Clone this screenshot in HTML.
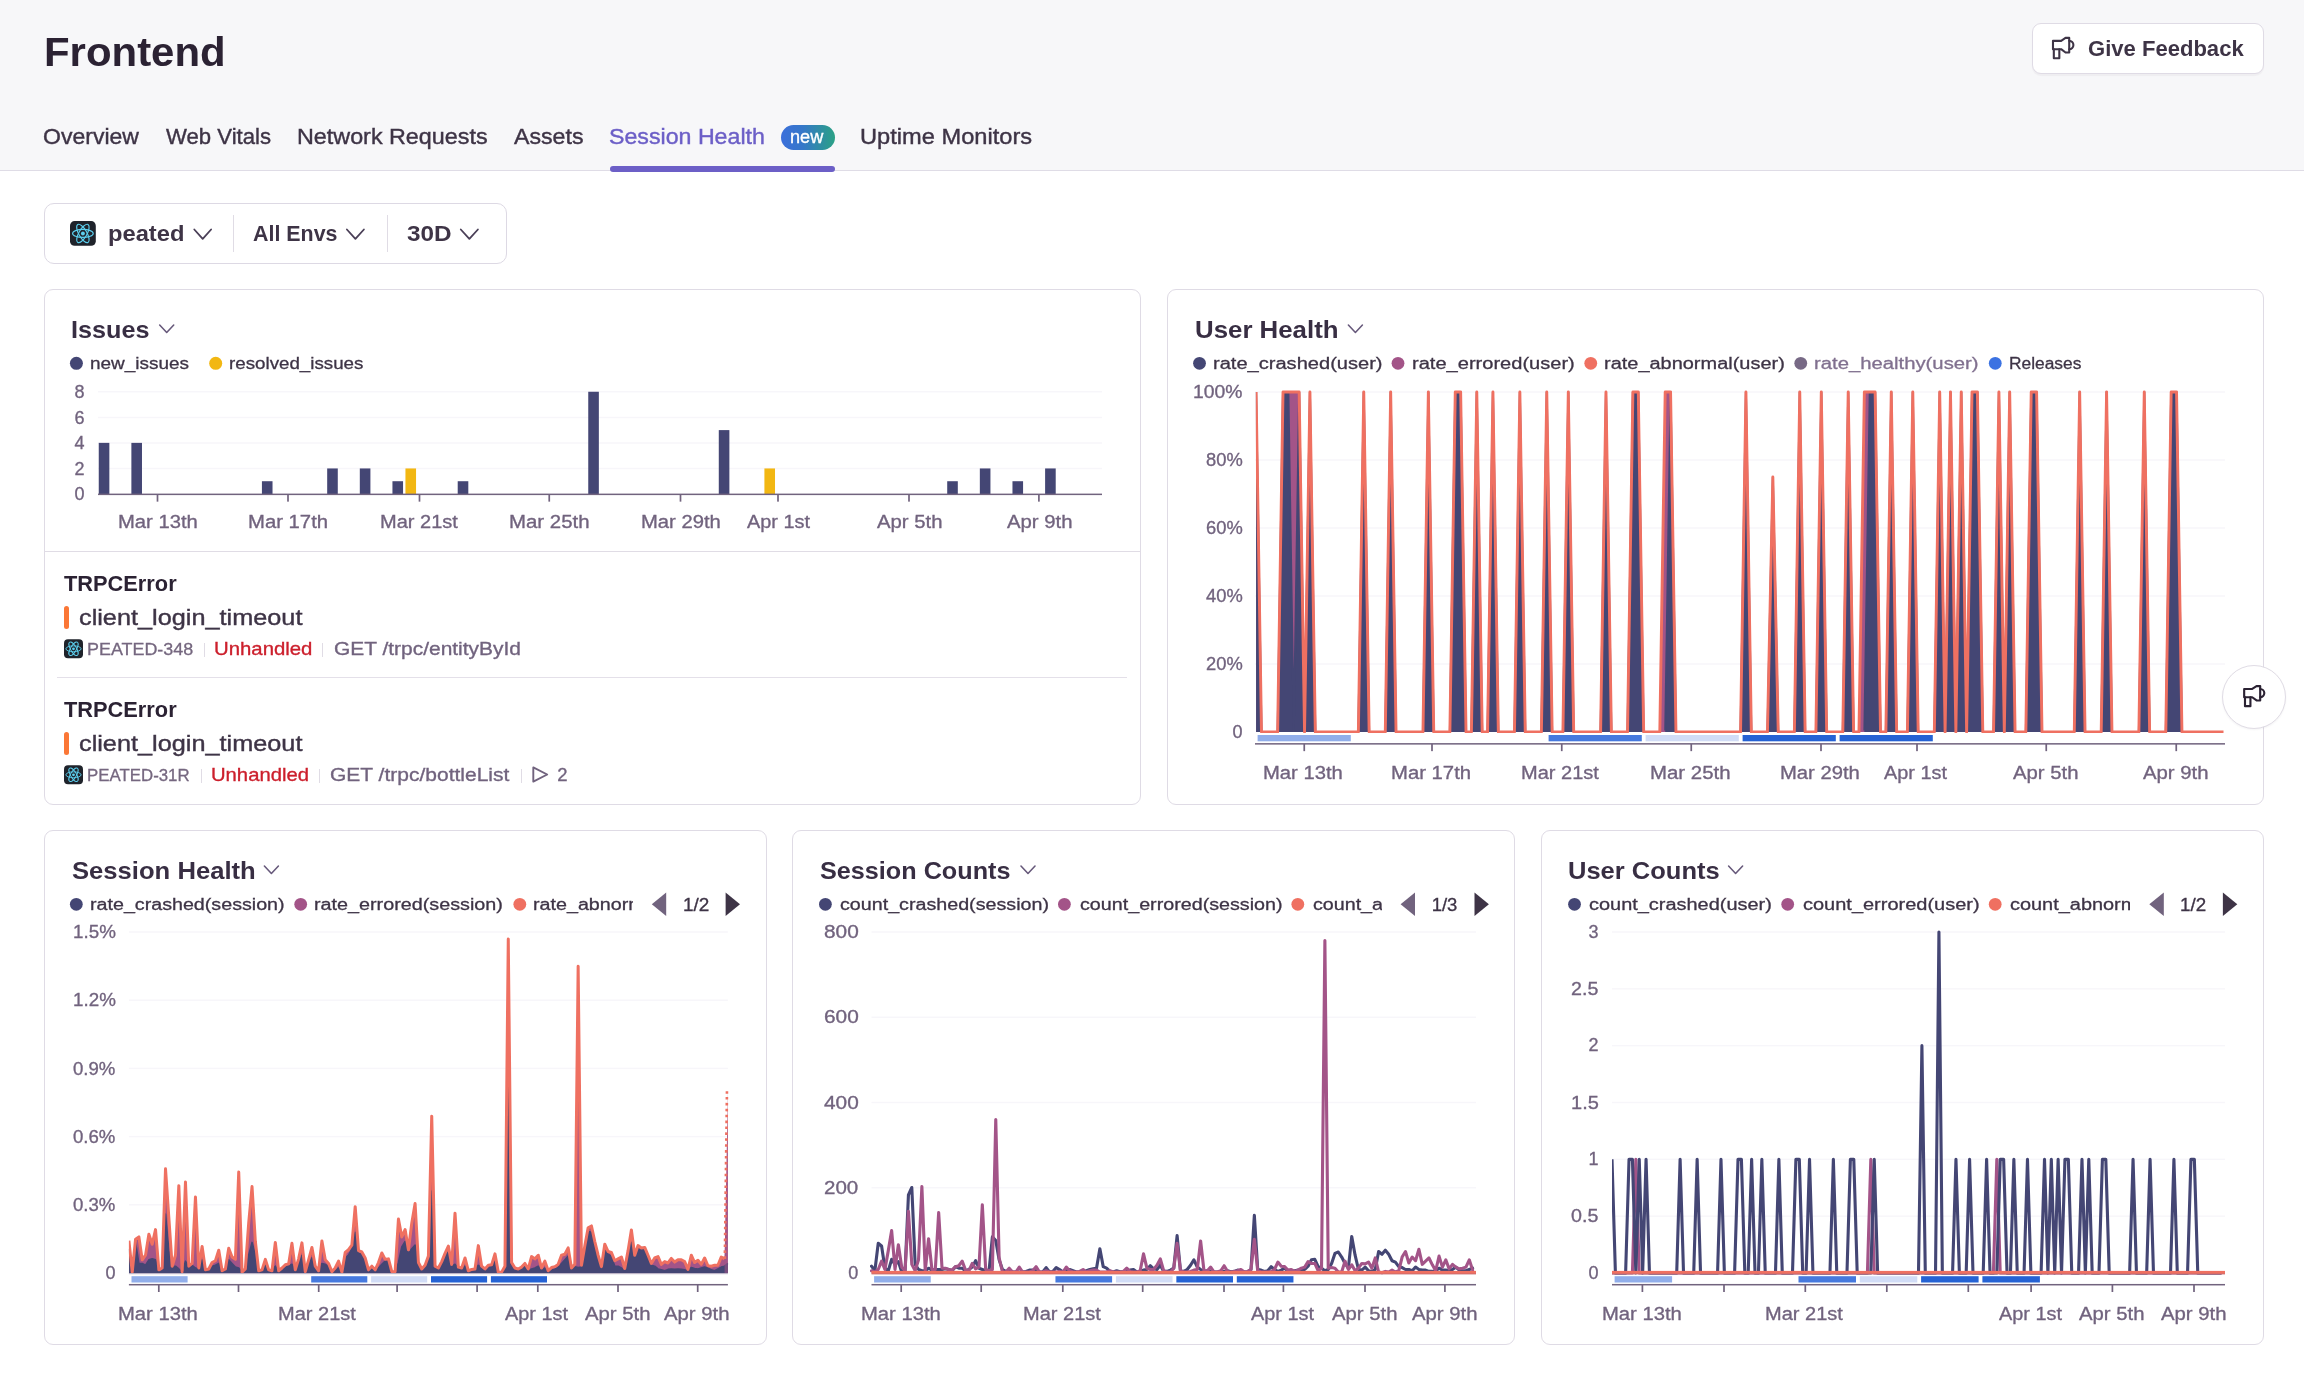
<!DOCTYPE html><html><head><meta charset="utf-8"><title>Frontend - Session Health</title><style>
html,body{margin:0;padding:0;background:#fff}
body{width:2304px;height:1388px;position:relative;overflow:hidden;font-family:"Liberation Sans",sans-serif}
.t{position:absolute;white-space:nowrap;transform-origin:0 50%;margin:0}
svg.ov{position:absolute;left:0;top:0;pointer-events:none}
</style></head><body>
<div style="position:absolute;left:0px;top:0px;width:2304px;height:170px;background:#f7f7f9;border-bottom:1px solid #dfdce6"></div>
<div style="position:absolute;left:781px;top:124.6px;width:54px;height:25.6px;border-radius:13px;background:linear-gradient(90deg,#3c6fdb 0%,#3577c9 40%,#2ba185 100%)"></div>
<div style="position:absolute;left:609.75px;top:166.2px;width:224.75px;height:5.6px;border-radius:3px;background:#6c5fc7"></div>
<div style="position:absolute;left:2032px;top:23px;width:232px;height:51px;box-sizing:border-box;background:#fff;border:1px solid #dfdbe5;border-radius:9px;box-shadow:0 2px 1px rgba(43,34,51,.04)"></div>
<div style="position:absolute;left:44px;top:203px;width:463px;height:61px;box-sizing:border-box;background:#fff;border:1.5px solid #ddd9e4;border-radius:10px"></div>
<div style="position:absolute;left:233.3px;top:215px;width:1px;height:37px;background:#e0dce5"></div>
<div style="position:absolute;left:386.8px;top:215px;width:1px;height:37px;background:#e0dce5"></div>
<div style="position:absolute;left:44px;top:289px;width:1097px;height:516px;box-sizing:border-box;background:#fff;border:1px solid #dfdbe5;border-radius:9px"></div>
<div style="position:absolute;left:1167px;top:289px;width:1097px;height:516px;box-sizing:border-box;background:#fff;border:1px solid #dfdbe5;border-radius:9px"></div>
<div style="position:absolute;left:44px;top:830px;width:723px;height:515px;box-sizing:border-box;background:#fff;border:1px solid #dfdbe5;border-radius:9px"></div>
<div style="position:absolute;left:792px;top:830px;width:723px;height:515px;box-sizing:border-box;background:#fff;border:1px solid #dfdbe5;border-radius:9px"></div>
<div style="position:absolute;left:1541px;top:830px;width:723px;height:515px;box-sizing:border-box;background:#fff;border:1px solid #dfdbe5;border-radius:9px"></div>
<div style="position:absolute;left:45px;top:551px;width:1095px;height:1px;background:#e0dce5"></div>
<div style="position:absolute;left:57px;top:677px;width:1070px;height:1px;background:#e4e0e9"></div>
<div style="position:absolute;left:64px;top:606.3px;width:5px;height:22.4px;border-radius:2.5px;background:#fb7736"></div>
<div style="position:absolute;left:204px;top:642.5px;width:1px;height:14px;background:#e0dce5"></div>
<div style="position:absolute;left:322px;top:642.5px;width:1px;height:14px;background:#e0dce5"></div>
<div style="position:absolute;left:64px;top:732.3px;width:5px;height:22.4px;border-radius:2.5px;background:#fb7736"></div>
<div style="position:absolute;left:201px;top:768.5px;width:1px;height:14px;background:#e0dce5"></div>
<div style="position:absolute;left:319px;top:768.5px;width:1px;height:14px;background:#e0dce5"></div>
<div style="position:absolute;left:521px;top:768.5px;width:1px;height:14px;background:#e0dce5"></div>
<svg class="ov" width="2304" height="1388" viewBox="0 0 2304 1388">
<g transform="translate(2051.8 36.8) scale(1.39375)" fill="none" stroke="#3e3446" stroke-width="1.5" stroke-linejoin="round" stroke-linecap="round"><path d="M0.85 2.9 H6.7 L9.85 0.8 H12.5 V11.25 H9.85 L6.7 8.9 H0.85 Z"/><path d="M1.45 8.9 V15.4 H5.4 V8.9"/><path d="M12.5 2.9 A3 3 0 0 1 12.5 8.9"/></g>
<rect x="70" y="221.1" width="25.8" height="24.7" rx="4.6" fill="#1f232b"/><ellipse cx="82.9" cy="233.45" rx="10.32" ry="3.999" fill="none" stroke="#5ccfee" stroke-width="1.161" transform="rotate(0 82.9 233.45)"/><ellipse cx="82.9" cy="233.45" rx="10.32" ry="3.999" fill="none" stroke="#5ccfee" stroke-width="1.161" transform="rotate(60 82.9 233.45)"/><ellipse cx="82.9" cy="233.45" rx="10.32" ry="3.999" fill="none" stroke="#5ccfee" stroke-width="1.161" transform="rotate(120 82.9 233.45)"/><circle cx="82.9" cy="233.45" r="1.935" fill="#5ccfee"/>
<path d="M194.3 229.5 L202.7 238.9 L211.1 229.5" fill="none" stroke="#4a3f57" stroke-width="1.8" stroke-linecap="round" stroke-linejoin="round"/>
<path d="M346.9 229.5 L355.4 238.9 L363.9 229.5" fill="none" stroke="#4a3f57" stroke-width="1.8" stroke-linecap="round" stroke-linejoin="round"/>
<path d="M460.8 229.5 L469.35 238.9 L477.9 229.5" fill="none" stroke="#4a3f57" stroke-width="1.8" stroke-linecap="round" stroke-linejoin="round"/>
<path d="M159.675 324.975 L166.7 332.525 L173.725 324.975" fill="none" stroke="#66587a" stroke-width="1.55" stroke-linecap="round" stroke-linejoin="round"/>
<circle cx="76.4" cy="363.3" r="6.5" fill="#444674"/>
<circle cx="215.7" cy="363.3" r="6.5" fill="#f2b712"/>
<rect x="98" y="391.05" width="1004" height="1.4" fill="#f7f6fa"/>
<rect x="98" y="416.8" width="1004" height="1.4" fill="#f7f6fa"/>
<rect x="98" y="442.3" width="1004" height="1.4" fill="#f7f6fa"/>
<rect x="98" y="467.8" width="1004" height="1.4" fill="#f7f6fa"/>
<rect x="98.75" y="442.88" width="10.6" height="51.12" fill="#444674"/>
<rect x="131.38" y="442.88" width="10.6" height="51.12" fill="#444674"/>
<rect x="261.92" y="481.22" width="10.6" height="12.78" fill="#444674"/>
<rect x="327.18" y="468.44" width="10.6" height="25.56" fill="#444674"/>
<rect x="359.81" y="468.44" width="10.6" height="25.56" fill="#444674"/>
<rect x="392.45" y="481.22" width="10.6" height="12.78" fill="#444674"/>
<rect x="457.71" y="481.22" width="10.6" height="12.78" fill="#444674"/>
<rect x="588.25" y="391.76" width="10.6" height="102.24" fill="#444674"/>
<rect x="718.78" y="430.10" width="10.6" height="63.90" fill="#444674"/>
<rect x="947.21" y="481.22" width="10.6" height="12.78" fill="#444674"/>
<rect x="979.84" y="468.44" width="10.6" height="25.56" fill="#444674"/>
<rect x="1012.47" y="481.22" width="10.6" height="12.78" fill="#444674"/>
<rect x="1045.11" y="468.44" width="10.6" height="25.56" fill="#444674"/>
<rect x="405.45" y="468.44" width="10.6" height="25.56" fill="#f2b712"/>
<rect x="764.41" y="468.44" width="10.6" height="25.56" fill="#f2b712"/>
<rect x="98" y="493.6" width="1004" height="1.5" fill="#71637e"/>
<rect x="156.65" y="494.35" width="1.7" height="7.3" fill="#71637e"/>
<rect x="287.15" y="494.35" width="1.7" height="7.3" fill="#71637e"/>
<rect x="418.65" y="494.35" width="1.7" height="7.3" fill="#71637e"/>
<rect x="548.4" y="494.35" width="1.7" height="7.3" fill="#71637e"/>
<rect x="679.65" y="494.35" width="1.7" height="7.3" fill="#71637e"/>
<rect x="777.15" y="494.35" width="1.7" height="7.3" fill="#71637e"/>
<rect x="908.15" y="494.35" width="1.7" height="7.3" fill="#71637e"/>
<rect x="1038.05" y="494.35" width="1.7" height="7.3" fill="#71637e"/>
<rect x="64" y="639.3" width="19" height="19" rx="4" fill="#1f232b"/><ellipse cx="73.5" cy="648.8" rx="7.6" ry="2.945" fill="none" stroke="#5ccfee" stroke-width="0.9" transform="rotate(0 73.5 648.8)"/><ellipse cx="73.5" cy="648.8" rx="7.6" ry="2.945" fill="none" stroke="#5ccfee" stroke-width="0.9" transform="rotate(60 73.5 648.8)"/><ellipse cx="73.5" cy="648.8" rx="7.6" ry="2.945" fill="none" stroke="#5ccfee" stroke-width="0.9" transform="rotate(120 73.5 648.8)"/><circle cx="73.5" cy="648.8" r="1.425" fill="#5ccfee"/>
<rect x="64" y="765.3" width="19" height="19" rx="4" fill="#1f232b"/><ellipse cx="73.5" cy="774.8" rx="7.6" ry="2.945" fill="none" stroke="#5ccfee" stroke-width="0.9" transform="rotate(0 73.5 774.8)"/><ellipse cx="73.5" cy="774.8" rx="7.6" ry="2.945" fill="none" stroke="#5ccfee" stroke-width="0.9" transform="rotate(60 73.5 774.8)"/><ellipse cx="73.5" cy="774.8" rx="7.6" ry="2.945" fill="none" stroke="#5ccfee" stroke-width="0.9" transform="rotate(120 73.5 774.8)"/><circle cx="73.5" cy="774.8" r="1.425" fill="#5ccfee"/>
<path d="M533.3 767.4 L547.2 774.5 L533.3 781.6 Z" fill="none" stroke="#71637e" stroke-width="1.9" stroke-linejoin="round"/>
<path d="M1348.38 324.975 L1355.4 332.525 L1362.42 324.975" fill="none" stroke="#66587a" stroke-width="1.55" stroke-linecap="round" stroke-linejoin="round"/>
<circle cx="1199.5" cy="363.3" r="6.4" fill="#444674"/>
<circle cx="1398" cy="363.3" r="6.4" fill="#a35488"/>
<circle cx="1590.75" cy="363.3" r="6.4" fill="#ef7061"/>
<circle cx="1800.75" cy="363.3" r="6.4" fill="#776985"/>
<circle cx="1995.25" cy="363.3" r="6.4" fill="#3b72e2"/>
<rect x="1255" y="391.3" width="970" height="1.4" fill="#f7f6fa"/>
<rect x="1255" y="459.3" width="970" height="1.4" fill="#f7f6fa"/>
<rect x="1255" y="527.3" width="970" height="1.4" fill="#f7f6fa"/>
<rect x="1255" y="595.3" width="970" height="1.4" fill="#f7f6fa"/>
<rect x="1255" y="663.3" width="970" height="1.4" fill="#f7f6fa"/>
<clipPath id="cu"><rect x="1255.6" y="385" width="969.4" height="352"/></clipPath><g clip-path="url(#cu)">
<polygon points="1256.10,392.00 1261.48,732.00 1266.87,732.00 1272.25,732.00 1277.63,732.00 1283.01,392.00 1288.40,392.00 1293.78,392.00 1299.16,392.00 1304.54,732.00 1309.93,392.00 1315.31,732.00 1320.69,732.00 1326.08,732.00 1331.46,732.00 1336.84,732.00 1342.22,732.00 1347.61,732.00 1352.99,732.00 1358.37,732.00 1363.76,392.00 1369.14,732.00 1374.52,732.00 1379.90,732.00 1385.29,732.00 1390.67,392.00 1396.05,732.00 1401.43,732.00 1406.82,732.00 1412.20,732.00 1417.58,732.00 1422.97,732.00 1428.35,392.00 1433.73,732.00 1439.11,732.00 1444.50,732.00 1449.88,732.00 1455.26,392.00 1460.65,392.00 1466.03,732.00 1471.41,732.00 1476.79,392.00 1482.18,732.00 1487.56,732.00 1492.94,392.00 1498.32,732.00 1503.71,732.00 1509.09,732.00 1514.47,732.00 1519.86,392.00 1525.24,732.00 1530.62,732.00 1536.00,732.00 1541.39,732.00 1546.77,392.00 1552.15,732.00 1557.54,732.00 1562.92,732.00 1568.30,392.00 1573.68,732.00 1579.07,732.00 1584.45,732.00 1589.83,732.00 1595.21,732.00 1600.60,732.00 1605.98,392.00 1611.36,732.00 1616.75,732.00 1622.13,732.00 1627.51,732.00 1632.89,392.00 1638.28,392.00 1643.66,732.00 1649.04,732.00 1654.43,732.00 1659.81,732.00 1665.19,392.00 1670.57,392.00 1675.96,732.00 1681.34,732.00 1686.72,732.00 1692.11,732.00 1697.49,732.00 1702.87,732.00 1708.25,732.00 1713.64,732.00 1719.02,732.00 1724.40,732.00 1729.78,732.00 1735.17,732.00 1740.55,732.00 1745.93,392.00 1751.32,732.00 1756.70,732.00 1762.08,732.00 1767.46,732.00 1772.85,477.00 1778.23,732.00 1783.61,732.00 1788.99,732.00 1794.38,732.00 1799.76,392.00 1805.14,732.00 1810.53,732.00 1815.91,732.00 1821.29,392.00 1826.67,732.00 1832.06,732.00 1837.44,732.00 1842.82,732.00 1848.21,392.00 1853.59,732.00 1858.97,732.00 1864.35,392.00 1869.74,392.00 1875.12,392.00 1880.50,732.00 1885.88,732.00 1891.27,392.00 1896.65,732.00 1902.03,732.00 1907.42,732.00 1912.80,392.00 1918.18,732.00 1923.56,732.00 1928.95,732.00 1934.33,732.00 1939.71,392.00 1945.10,732.00 1950.48,392.00 1955.86,732.00 1961.24,392.00 1966.63,732.00 1972.01,392.00 1977.39,392.00 1982.78,732.00 1988.16,732.00 1993.54,732.00 1998.92,392.00 2004.31,732.00 2009.69,392.00 2015.07,732.00 2020.45,732.00 2025.84,732.00 2031.22,392.00 2036.60,392.00 2041.99,732.00 2047.37,732.00 2052.75,732.00 2058.13,732.00 2063.52,732.00 2068.90,732.00 2074.28,732.00 2079.66,392.00 2085.05,732.00 2090.43,732.00 2095.81,732.00 2101.20,732.00 2106.58,392.00 2111.96,732.00 2117.34,732.00 2122.73,732.00 2128.11,732.00 2133.49,732.00 2138.88,732.00 2144.26,392.00 2149.64,732.00 2155.02,732.00 2160.41,732.00 2165.79,732.00 2171.17,392.00 2176.55,392.00 2181.94,732.00 2187.32,732.00 2192.70,732.00 2198.09,732.00 2203.47,732.00 2208.85,732.00 2214.23,732.00 2219.62,732.00 2225.00,732.00 2225,732 1256.1,732" fill="#a35488"/>
<polygon points="1256.10,392.00 1261.48,732.00 1266.87,732.00 1272.25,732.00 1277.63,732.00 1283.01,392.00 1288.40,392.00 1293.78,732.00 1299.16,392.00 1304.54,732.00 1309.93,392.00 1315.31,732.00 1320.69,732.00 1326.08,732.00 1331.46,732.00 1336.84,732.00 1342.22,732.00 1347.61,732.00 1352.99,732.00 1358.37,732.00 1363.76,392.00 1369.14,732.00 1374.52,732.00 1379.90,732.00 1385.29,732.00 1390.67,392.00 1396.05,732.00 1401.43,732.00 1406.82,732.00 1412.20,732.00 1417.58,732.00 1422.97,732.00 1428.35,392.00 1433.73,732.00 1439.11,732.00 1444.50,732.00 1449.88,732.00 1455.26,392.00 1460.65,392.00 1466.03,732.00 1471.41,732.00 1476.79,392.00 1482.18,732.00 1487.56,732.00 1492.94,392.00 1498.32,732.00 1503.71,732.00 1509.09,732.00 1514.47,732.00 1519.86,392.00 1525.24,732.00 1530.62,732.00 1536.00,732.00 1541.39,732.00 1546.77,392.00 1552.15,732.00 1557.54,732.00 1562.92,732.00 1568.30,392.00 1573.68,732.00 1579.07,732.00 1584.45,732.00 1589.83,732.00 1595.21,732.00 1600.60,732.00 1605.98,392.00 1611.36,732.00 1616.75,732.00 1622.13,732.00 1627.51,732.00 1632.89,392.00 1638.28,392.00 1643.66,732.00 1649.04,732.00 1654.43,732.00 1659.81,732.00 1665.19,732.00 1670.57,392.00 1675.96,732.00 1681.34,732.00 1686.72,732.00 1692.11,732.00 1697.49,732.00 1702.87,732.00 1708.25,732.00 1713.64,732.00 1719.02,732.00 1724.40,732.00 1729.78,732.00 1735.17,732.00 1740.55,732.00 1745.93,392.00 1751.32,732.00 1756.70,732.00 1762.08,732.00 1767.46,732.00 1772.85,477.00 1778.23,732.00 1783.61,732.00 1788.99,732.00 1794.38,732.00 1799.76,392.00 1805.14,732.00 1810.53,732.00 1815.91,732.00 1821.29,392.00 1826.67,732.00 1832.06,732.00 1837.44,732.00 1842.82,732.00 1848.21,392.00 1853.59,732.00 1858.97,732.00 1864.35,732.00 1869.74,392.00 1875.12,392.00 1880.50,732.00 1885.88,732.00 1891.27,392.00 1896.65,732.00 1902.03,732.00 1907.42,732.00 1912.80,392.00 1918.18,732.00 1923.56,732.00 1928.95,732.00 1934.33,732.00 1939.71,392.00 1945.10,732.00 1950.48,392.00 1955.86,732.00 1961.24,392.00 1966.63,732.00 1972.01,392.00 1977.39,392.00 1982.78,732.00 1988.16,732.00 1993.54,732.00 1998.92,392.00 2004.31,732.00 2009.69,392.00 2015.07,732.00 2020.45,732.00 2025.84,732.00 2031.22,392.00 2036.60,392.00 2041.99,732.00 2047.37,732.00 2052.75,732.00 2058.13,732.00 2063.52,732.00 2068.90,732.00 2074.28,732.00 2079.66,392.00 2085.05,732.00 2090.43,732.00 2095.81,732.00 2101.20,732.00 2106.58,392.00 2111.96,732.00 2117.34,732.00 2122.73,732.00 2128.11,732.00 2133.49,732.00 2138.88,732.00 2144.26,392.00 2149.64,732.00 2155.02,732.00 2160.41,732.00 2165.79,732.00 2171.17,392.00 2176.55,392.00 2181.94,732.00 2187.32,732.00 2192.70,732.00 2198.09,732.00 2203.47,732.00 2208.85,732.00 2214.23,732.00 2219.62,732.00 2225.00,732.00 2225,732 1256.1,732" fill="#444674"/>
<clipPath id="cu2"><rect x="1255.6" y="385" width="969.4" height="345.5"/></clipPath>
<polyline clip-path="url(#cu2)" points="1256.10,392.00 1261.48,732.00 1266.87,732.00 1272.25,732.00 1277.63,732.00 1283.01,392.00 1288.40,392.00 1293.78,732.00 1299.16,392.00 1304.54,732.00 1309.93,392.00 1315.31,732.00 1320.69,732.00 1326.08,732.00 1331.46,732.00 1336.84,732.00 1342.22,732.00 1347.61,732.00 1352.99,732.00 1358.37,732.00 1363.76,392.00 1369.14,732.00 1374.52,732.00 1379.90,732.00 1385.29,732.00 1390.67,392.00 1396.05,732.00 1401.43,732.00 1406.82,732.00 1412.20,732.00 1417.58,732.00 1422.97,732.00 1428.35,392.00 1433.73,732.00 1439.11,732.00 1444.50,732.00 1449.88,732.00 1455.26,392.00 1460.65,392.00 1466.03,732.00 1471.41,732.00 1476.79,392.00 1482.18,732.00 1487.56,732.00 1492.94,392.00 1498.32,732.00 1503.71,732.00 1509.09,732.00 1514.47,732.00 1519.86,392.00 1525.24,732.00 1530.62,732.00 1536.00,732.00 1541.39,732.00 1546.77,392.00 1552.15,732.00 1557.54,732.00 1562.92,732.00 1568.30,392.00 1573.68,732.00 1579.07,732.00 1584.45,732.00 1589.83,732.00 1595.21,732.00 1600.60,732.00 1605.98,392.00 1611.36,732.00 1616.75,732.00 1622.13,732.00 1627.51,732.00 1632.89,392.00 1638.28,392.00 1643.66,732.00 1649.04,732.00 1654.43,732.00 1659.81,732.00 1665.19,732.00 1670.57,392.00 1675.96,732.00 1681.34,732.00 1686.72,732.00 1692.11,732.00 1697.49,732.00 1702.87,732.00 1708.25,732.00 1713.64,732.00 1719.02,732.00 1724.40,732.00 1729.78,732.00 1735.17,732.00 1740.55,732.00 1745.93,392.00 1751.32,732.00 1756.70,732.00 1762.08,732.00 1767.46,732.00 1772.85,477.00 1778.23,732.00 1783.61,732.00 1788.99,732.00 1794.38,732.00 1799.76,392.00 1805.14,732.00 1810.53,732.00 1815.91,732.00 1821.29,392.00 1826.67,732.00 1832.06,732.00 1837.44,732.00 1842.82,732.00 1848.21,392.00 1853.59,732.00 1858.97,732.00 1864.35,732.00 1869.74,392.00 1875.12,392.00 1880.50,732.00 1885.88,732.00 1891.27,392.00 1896.65,732.00 1902.03,732.00 1907.42,732.00 1912.80,392.00 1918.18,732.00 1923.56,732.00 1928.95,732.00 1934.33,732.00 1939.71,392.00 1945.10,732.00 1950.48,392.00 1955.86,732.00 1961.24,392.00 1966.63,732.00 1972.01,392.00 1977.39,392.00 1982.78,732.00 1988.16,732.00 1993.54,732.00 1998.92,392.00 2004.31,732.00 2009.69,392.00 2015.07,732.00 2020.45,732.00 2025.84,732.00 2031.22,392.00 2036.60,392.00 2041.99,732.00 2047.37,732.00 2052.75,732.00 2058.13,732.00 2063.52,732.00 2068.90,732.00 2074.28,732.00 2079.66,392.00 2085.05,732.00 2090.43,732.00 2095.81,732.00 2101.20,732.00 2106.58,392.00 2111.96,732.00 2117.34,732.00 2122.73,732.00 2128.11,732.00 2133.49,732.00 2138.88,732.00 2144.26,392.00 2149.64,732.00 2155.02,732.00 2160.41,732.00 2165.79,732.00 2171.17,392.00 2176.55,392.00 2181.94,732.00 2187.32,732.00 2192.70,732.00 2198.09,732.00 2203.47,732.00 2208.85,732.00 2214.23,732.00 2219.62,732.00 2225.00,732.00" fill="none" stroke="#444674" stroke-width="2" stroke-linejoin="round"/>
<clipPath id="cu3"><rect x="1255.6" y="385" width="969.4" height="348.1"/></clipPath>
<polyline clip-path="url(#cu3)" points="1256.10,392.00 1261.48,732.00 1266.87,732.00 1272.25,732.00 1277.63,732.00 1283.01,392.00 1288.40,392.00 1293.78,392.00 1299.16,392.00 1304.54,732.00 1309.93,392.00 1315.31,732.00 1320.69,732.00 1326.08,732.00 1331.46,732.00 1336.84,732.00 1342.22,732.00 1347.61,732.00 1352.99,732.00 1358.37,732.00 1363.76,392.00 1369.14,732.00 1374.52,732.00 1379.90,732.00 1385.29,732.00 1390.67,392.00 1396.05,732.00 1401.43,732.00 1406.82,732.00 1412.20,732.00 1417.58,732.00 1422.97,732.00 1428.35,392.00 1433.73,732.00 1439.11,732.00 1444.50,732.00 1449.88,732.00 1455.26,392.00 1460.65,392.00 1466.03,732.00 1471.41,732.00 1476.79,392.00 1482.18,732.00 1487.56,732.00 1492.94,392.00 1498.32,732.00 1503.71,732.00 1509.09,732.00 1514.47,732.00 1519.86,392.00 1525.24,732.00 1530.62,732.00 1536.00,732.00 1541.39,732.00 1546.77,392.00 1552.15,732.00 1557.54,732.00 1562.92,732.00 1568.30,392.00 1573.68,732.00 1579.07,732.00 1584.45,732.00 1589.83,732.00 1595.21,732.00 1600.60,732.00 1605.98,392.00 1611.36,732.00 1616.75,732.00 1622.13,732.00 1627.51,732.00 1632.89,392.00 1638.28,392.00 1643.66,732.00 1649.04,732.00 1654.43,732.00 1659.81,732.00 1665.19,392.00 1670.57,392.00 1675.96,732.00 1681.34,732.00 1686.72,732.00 1692.11,732.00 1697.49,732.00 1702.87,732.00 1708.25,732.00 1713.64,732.00 1719.02,732.00 1724.40,732.00 1729.78,732.00 1735.17,732.00 1740.55,732.00 1745.93,392.00 1751.32,732.00 1756.70,732.00 1762.08,732.00 1767.46,732.00 1772.85,477.00 1778.23,732.00 1783.61,732.00 1788.99,732.00 1794.38,732.00 1799.76,392.00 1805.14,732.00 1810.53,732.00 1815.91,732.00 1821.29,392.00 1826.67,732.00 1832.06,732.00 1837.44,732.00 1842.82,732.00 1848.21,392.00 1853.59,732.00 1858.97,732.00 1864.35,392.00 1869.74,392.00 1875.12,392.00 1880.50,732.00 1885.88,732.00 1891.27,392.00 1896.65,732.00 1902.03,732.00 1907.42,732.00 1912.80,392.00 1918.18,732.00 1923.56,732.00 1928.95,732.00 1934.33,732.00 1939.71,392.00 1945.10,732.00 1950.48,392.00 1955.86,732.00 1961.24,392.00 1966.63,732.00 1972.01,392.00 1977.39,392.00 1982.78,732.00 1988.16,732.00 1993.54,732.00 1998.92,392.00 2004.31,732.00 2009.69,392.00 2015.07,732.00 2020.45,732.00 2025.84,732.00 2031.22,392.00 2036.60,392.00 2041.99,732.00 2047.37,732.00 2052.75,732.00 2058.13,732.00 2063.52,732.00 2068.90,732.00 2074.28,732.00 2079.66,392.00 2085.05,732.00 2090.43,732.00 2095.81,732.00 2101.20,732.00 2106.58,392.00 2111.96,732.00 2117.34,732.00 2122.73,732.00 2128.11,732.00 2133.49,732.00 2138.88,732.00 2144.26,392.00 2149.64,732.00 2155.02,732.00 2160.41,732.00 2165.79,732.00 2171.17,392.00 2176.55,392.00 2181.94,732.00 2187.32,732.00 2192.70,732.00 2198.09,732.00 2203.47,732.00 2208.85,732.00 2214.23,732.00 2219.62,732.00 2223.50,732.00" fill="none" stroke="#ef7061" stroke-width="2.9" stroke-linejoin="round"/>
</g>
<rect x="1257.6" y="735" width="93.2" height="6.3" fill="#91aeea"/>
<rect x="1548.6" y="735" width="93.2" height="6.3" fill="#4679de"/>
<rect x="1645.6" y="735" width="93.2" height="6.3" fill="#d1dcf6"/>
<rect x="1742.6" y="735" width="93.2" height="6.3" fill="#2562d4"/>
<rect x="1839.6" y="735" width="93.2" height="6.3" fill="#2562d4"/>
<rect x="1255" y="743.1" width="970" height="1.5" fill="#71637e"/>
<rect x="1303.4" y="743.85" width="1.7" height="7.3" fill="#71637e"/>
<rect x="1431.15" y="743.85" width="1.7" height="7.3" fill="#71637e"/>
<rect x="1560.9" y="743.85" width="1.7" height="7.3" fill="#71637e"/>
<rect x="1690.4" y="743.85" width="1.7" height="7.3" fill="#71637e"/>
<rect x="1820.15" y="743.85" width="1.7" height="7.3" fill="#71637e"/>
<rect x="1916.15" y="743.85" width="1.7" height="7.3" fill="#71637e"/>
<rect x="2045.4" y="743.85" width="1.7" height="7.3" fill="#71637e"/>
<rect x="2175.4" y="743.85" width="1.7" height="7.3" fill="#71637e"/>
<path d="M264.375 865.975 L271.4 873.525 L278.425 865.975" fill="none" stroke="#66587a" stroke-width="1.55" stroke-linecap="round" stroke-linejoin="round"/>
<circle cx="76.3" cy="904.3" r="6.4" fill="#444674"/>
<circle cx="300.7" cy="904.3" r="6.4" fill="#a35488"/>
<circle cx="519.8" cy="904.3" r="6.4" fill="#ef7061"/>
<path d="M666.2 892.45 L651.8 904.2 L666.2 915.95 Z" fill="#71637e"/>
<path d="M725.6 892.45 L740 904.2 L725.6 915.95 Z" fill="#3e3446"/>
<rect x="128.9" y="931.3" width="599" height="1.4" fill="#f7f6fa"/>
<rect x="128.9" y="999.5" width="599" height="1.4" fill="#f7f6fa"/>
<rect x="128.9" y="1067.7" width="599" height="1.4" fill="#f7f6fa"/>
<rect x="128.9" y="1135.9" width="599" height="1.4" fill="#f7f6fa"/>
<rect x="128.9" y="1204.1" width="599" height="1.4" fill="#f7f6fa"/>
<clipPath id="cs"><rect x="128.9" y="925" width="599.8" height="350"/></clipPath><g clip-path="url(#cs)">
<polygon points="128.90,1240.58 132.23,1272.14 135.56,1239.20 138.88,1236.92 142.21,1259.79 145.54,1255.22 148.87,1234.17 152.19,1244.24 155.52,1229.60 158.85,1269.85 162.18,1268.02 165.51,1168.76 168.83,1217.70 172.16,1266.19 175.49,1255.22 178.82,1185.68 182.14,1271.68 185.47,1182.02 188.80,1266.19 192.13,1263.45 195.46,1197.12 198.78,1268.02 202.11,1246.52 205.44,1269.85 208.77,1268.94 212.09,1262.53 215.42,1260.70 218.75,1250.18 222.08,1270.77 225.41,1268.94 228.73,1248.35 232.06,1257.04 235.39,1259.33 238.72,1171.96 242.04,1272.14 245.37,1268.94 248.70,1223.19 252.03,1186.60 255.36,1241.49 258.68,1270.77 262.01,1269.85 265.34,1259.33 268.67,1269.85 271.99,1270.77 275.32,1242.41 278.65,1270.77 281.98,1268.02 285.31,1264.82 288.63,1263.91 291.96,1243.32 295.29,1269.85 298.62,1258.87 301.94,1242.86 305.27,1271.68 308.60,1259.79 311.93,1247.44 315.26,1266.19 318.58,1270.77 321.91,1241.03 325.24,1259.79 328.57,1263.45 331.89,1271.68 335.22,1268.02 338.55,1261.16 341.88,1272.14 345.21,1252.47 348.53,1249.73 351.86,1245.15 355.19,1206.72 358.52,1250.64 361.84,1252.01 365.17,1257.96 368.50,1269.85 371.83,1266.19 375.16,1269.85 378.48,1262.53 381.81,1252.93 385.14,1259.33 388.47,1258.87 391.79,1271.68 395.12,1271.68 398.45,1219.08 401.78,1236.92 405.11,1229.60 408.43,1249.73 411.76,1223.19 415.09,1203.52 418.42,1262.53 421.74,1268.94 425.07,1265.28 428.40,1256.13 431.73,1116.15 435.06,1266.19 438.38,1268.02 441.71,1261.62 445.04,1253.39 448.37,1246.07 451.69,1264.36 455.02,1213.13 458.35,1267.11 461.68,1268.02 465.01,1257.96 468.33,1270.77 471.66,1269.40 474.99,1268.94 478.32,1245.61 481.64,1266.19 484.97,1268.94 488.30,1265.28 491.63,1264.82 494.96,1253.84 498.28,1272.14 501.61,1272.14 504.94,1266.19 508.27,938.93 511.59,1262.53 514.92,1268.02 518.25,1268.94 521.58,1267.11 524.91,1263.45 528.23,1268.94 531.56,1256.59 534.89,1258.87 538.22,1255.22 541.54,1268.02 544.87,1261.16 548.20,1270.77 551.53,1267.57 554.86,1266.65 558.18,1264.36 561.51,1255.22 564.84,1254.30 568.17,1247.90 571.49,1268.02 574.82,1264.36 578.15,966.19 581.48,1265.28 584.81,1246.07 588.13,1227.77 591.46,1225.94 594.79,1241.49 598.12,1255.22 601.44,1266.65 604.77,1244.24 608.10,1251.56 611.43,1252.47 614.76,1260.70 618.08,1258.87 621.41,1257.04 624.74,1268.48 628.07,1250.64 631.39,1230.05 634.72,1255.22 638.05,1245.61 641.38,1247.90 644.71,1247.44 648.03,1255.22 651.36,1263.45 654.69,1257.96 658.02,1256.59 661.34,1264.36 664.67,1261.62 668.00,1262.99 671.33,1258.42 674.66,1262.08 677.98,1259.79 681.31,1259.79 684.64,1261.62 687.97,1269.40 691.29,1255.22 694.62,1262.53 697.95,1260.25 701.28,1264.36 704.61,1257.96 707.93,1265.74 711.26,1266.19 714.59,1265.28 717.92,1265.28 721.24,1257.04 724.57,1258.87 727.90,1091.17 727.9,1273 128.9,1273" fill="#a35488"/>
<polygon points="128.90,1248.81 132.23,1272.96 135.56,1242.41 138.88,1263.45 142.21,1263.45 145.54,1265.28 148.87,1259.79 152.19,1258.87 155.52,1259.79 158.85,1271.68 162.18,1270.77 165.51,1214.04 168.83,1250.64 172.16,1267.11 175.49,1266.19 178.82,1268.94 182.14,1272.60 185.47,1261.16 188.80,1267.11 192.13,1265.28 195.46,1268.02 198.78,1268.94 202.11,1259.79 205.44,1270.77 208.77,1269.85 212.09,1266.19 215.42,1265.28 218.75,1263.45 222.08,1271.68 225.41,1269.85 228.73,1259.79 232.06,1263.45 235.39,1267.11 238.72,1268.02 242.04,1272.60 245.37,1269.85 248.70,1255.22 252.03,1242.41 255.36,1254.30 258.68,1271.68 262.01,1270.77 265.34,1265.28 268.67,1270.77 271.99,1271.68 275.32,1266.19 278.65,1271.68 281.98,1268.94 285.31,1266.19 288.63,1265.74 291.96,1264.36 295.29,1270.77 298.62,1264.36 301.94,1255.22 305.27,1272.14 308.60,1264.36 311.93,1257.96 315.26,1268.02 318.58,1271.68 321.91,1263.45 325.24,1264.36 328.57,1266.19 331.89,1272.14 335.22,1269.85 338.55,1268.02 341.88,1272.60 345.21,1257.96 348.53,1255.22 351.86,1248.81 355.19,1232.34 358.52,1253.39 361.84,1254.30 365.17,1259.79 368.50,1270.77 371.83,1268.02 375.16,1270.77 378.48,1268.02 381.81,1264.36 385.14,1261.16 388.47,1261.16 391.79,1272.14 395.12,1272.14 398.45,1262.53 401.78,1246.98 405.11,1241.49 408.43,1253.39 411.76,1248.81 415.09,1245.15 418.42,1264.36 421.74,1269.85 425.07,1266.65 428.40,1257.96 431.73,1191.17 435.06,1267.57 438.38,1268.94 441.71,1263.45 445.04,1256.13 448.37,1251.56 451.69,1265.74 455.02,1264.36 458.35,1268.48 461.68,1268.94 465.01,1266.19 468.33,1271.68 471.66,1270.77 474.99,1269.85 478.32,1265.28 481.64,1268.02 484.97,1269.85 488.30,1267.11 491.63,1266.19 494.96,1260.70 498.28,1272.60 501.61,1272.60 504.94,1268.02 508.27,967.02 511.59,1264.36 514.92,1268.94 518.25,1269.85 521.58,1268.02 524.91,1266.19 528.23,1270.77 531.56,1268.94 534.89,1268.02 538.22,1266.19 541.54,1269.85 544.87,1268.02 548.20,1272.14 551.53,1269.85 554.86,1268.94 558.18,1267.11 561.51,1263.45 564.84,1259.79 568.17,1256.13 571.49,1268.94 574.82,1266.65 578.15,1267.57 581.48,1267.11 584.81,1248.81 588.13,1231.43 591.46,1232.34 594.79,1244.24 598.12,1257.96 601.44,1268.02 604.77,1249.73 608.10,1254.30 611.43,1256.13 614.76,1266.19 618.08,1266.19 621.41,1268.02 624.74,1270.77 628.07,1256.13 631.39,1242.41 634.72,1257.04 638.05,1248.81 641.38,1249.73 644.71,1249.73 648.03,1257.96 651.36,1265.28 654.69,1266.19 658.02,1268.94 661.34,1269.85 664.67,1270.77 668.00,1269.40 671.33,1268.94 674.66,1269.40 677.98,1268.94 681.31,1269.40 684.64,1269.85 687.97,1270.77 691.29,1267.57 694.62,1268.48 697.95,1268.94 701.28,1268.02 704.61,1267.11 707.93,1268.02 711.26,1269.85 714.59,1270.77 717.92,1268.94 721.24,1267.11 724.57,1266.19 727.90,1263.45 727.9,1273 128.9,1273" fill="#444674"/>
<polyline points="128.90,1248.81 132.23,1272.96 135.56,1242.41 138.88,1263.45 142.21,1263.45 145.54,1265.28 148.87,1259.79 152.19,1258.87 155.52,1259.79 158.85,1271.68 162.18,1270.77 165.51,1214.04 168.83,1250.64 172.16,1267.11 175.49,1266.19 178.82,1268.94 182.14,1272.60 185.47,1261.16 188.80,1267.11 192.13,1265.28 195.46,1268.02 198.78,1268.94 202.11,1259.79 205.44,1270.77 208.77,1269.85 212.09,1266.19 215.42,1265.28 218.75,1263.45 222.08,1271.68 225.41,1269.85 228.73,1259.79 232.06,1263.45 235.39,1267.11 238.72,1268.02 242.04,1272.60 245.37,1269.85 248.70,1255.22 252.03,1242.41 255.36,1254.30 258.68,1271.68 262.01,1270.77 265.34,1265.28 268.67,1270.77 271.99,1271.68 275.32,1266.19 278.65,1271.68 281.98,1268.94 285.31,1266.19 288.63,1265.74 291.96,1264.36 295.29,1270.77 298.62,1264.36 301.94,1255.22 305.27,1272.14 308.60,1264.36 311.93,1257.96 315.26,1268.02 318.58,1271.68 321.91,1263.45 325.24,1264.36 328.57,1266.19 331.89,1272.14 335.22,1269.85 338.55,1268.02 341.88,1272.60 345.21,1257.96 348.53,1255.22 351.86,1248.81 355.19,1232.34 358.52,1253.39 361.84,1254.30 365.17,1259.79 368.50,1270.77 371.83,1268.02 375.16,1270.77 378.48,1268.02 381.81,1264.36 385.14,1261.16 388.47,1261.16 391.79,1272.14 395.12,1272.14 398.45,1262.53 401.78,1246.98 405.11,1241.49 408.43,1253.39 411.76,1248.81 415.09,1245.15 418.42,1264.36 421.74,1269.85 425.07,1266.65 428.40,1257.96 431.73,1191.17 435.06,1267.57 438.38,1268.94 441.71,1263.45 445.04,1256.13 448.37,1251.56 451.69,1265.74 455.02,1264.36 458.35,1268.48 461.68,1268.94 465.01,1266.19 468.33,1271.68 471.66,1270.77 474.99,1269.85 478.32,1265.28 481.64,1268.02 484.97,1269.85 488.30,1267.11 491.63,1266.19 494.96,1260.70 498.28,1272.60 501.61,1272.60 504.94,1268.02 508.27,967.02 511.59,1264.36 514.92,1268.94 518.25,1269.85 521.58,1268.02 524.91,1266.19 528.23,1270.77 531.56,1268.94 534.89,1268.02 538.22,1266.19 541.54,1269.85 544.87,1268.02 548.20,1272.14 551.53,1269.85 554.86,1268.94 558.18,1267.11 561.51,1263.45 564.84,1259.79 568.17,1256.13 571.49,1268.94 574.82,1266.65 578.15,1267.57 581.48,1267.11 584.81,1248.81 588.13,1231.43 591.46,1232.34 594.79,1244.24 598.12,1257.96 601.44,1268.02 604.77,1249.73 608.10,1254.30 611.43,1256.13 614.76,1266.19 618.08,1266.19 621.41,1268.02 624.74,1270.77 628.07,1256.13 631.39,1242.41 634.72,1257.04 638.05,1248.81 641.38,1249.73 644.71,1249.73 648.03,1257.96 651.36,1265.28 654.69,1266.19 658.02,1268.94 661.34,1269.85 664.67,1270.77 668.00,1269.40 671.33,1268.94 674.66,1269.40 677.98,1268.94 681.31,1269.40 684.64,1269.85 687.97,1270.77 691.29,1267.57 694.62,1268.48 697.95,1268.94 701.28,1268.02 704.61,1267.11 707.93,1268.02 711.26,1269.85 714.59,1270.77 717.92,1268.94 721.24,1267.11 724.57,1266.19 727.90,1263.45" fill="none" stroke="#444674" stroke-width="1.6" stroke-linejoin="round"/>
<polyline points="128.90,1240.58 132.23,1272.14 135.56,1239.20 138.88,1236.92 142.21,1259.79 145.54,1255.22 148.87,1234.17 152.19,1244.24 155.52,1229.60 158.85,1269.85 162.18,1268.02 165.51,1168.76 168.83,1217.70 172.16,1266.19 175.49,1255.22 178.82,1185.68 182.14,1271.68 185.47,1182.02 188.80,1266.19 192.13,1263.45 195.46,1197.12 198.78,1268.02 202.11,1246.52 205.44,1269.85 208.77,1268.94 212.09,1262.53 215.42,1260.70 218.75,1250.18 222.08,1270.77 225.41,1268.94 228.73,1248.35 232.06,1257.04 235.39,1259.33 238.72,1171.96 242.04,1272.14 245.37,1268.94 248.70,1223.19 252.03,1186.60 255.36,1241.49 258.68,1270.77 262.01,1269.85 265.34,1259.33 268.67,1269.85 271.99,1270.77 275.32,1242.41 278.65,1270.77 281.98,1268.02 285.31,1264.82 288.63,1263.91 291.96,1243.32 295.29,1269.85 298.62,1258.87 301.94,1242.86 305.27,1271.68 308.60,1259.79 311.93,1247.44 315.26,1266.19 318.58,1270.77 321.91,1241.03 325.24,1259.79 328.57,1263.45 331.89,1271.68 335.22,1268.02 338.55,1261.16 341.88,1272.14 345.21,1252.47 348.53,1249.73 351.86,1245.15 355.19,1206.72 358.52,1250.64 361.84,1252.01 365.17,1257.96 368.50,1269.85 371.83,1266.19 375.16,1269.85 378.48,1262.53 381.81,1252.93 385.14,1259.33 388.47,1258.87 391.79,1271.68 395.12,1271.68 398.45,1219.08 401.78,1236.92 405.11,1229.60 408.43,1249.73 411.76,1223.19 415.09,1203.52 418.42,1262.53 421.74,1268.94 425.07,1265.28 428.40,1256.13 431.73,1116.15 435.06,1266.19 438.38,1268.02 441.71,1261.62 445.04,1253.39 448.37,1246.07 451.69,1264.36 455.02,1213.13 458.35,1267.11 461.68,1268.02 465.01,1257.96 468.33,1270.77 471.66,1269.40 474.99,1268.94 478.32,1245.61 481.64,1266.19 484.97,1268.94 488.30,1265.28 491.63,1264.82 494.96,1253.84 498.28,1272.14 501.61,1272.14 504.94,1266.19 508.27,938.93 511.59,1262.53 514.92,1268.02 518.25,1268.94 521.58,1267.11 524.91,1263.45 528.23,1268.94 531.56,1256.59 534.89,1258.87 538.22,1255.22 541.54,1268.02 544.87,1261.16 548.20,1270.77 551.53,1267.57 554.86,1266.65 558.18,1264.36 561.51,1255.22 564.84,1254.30 568.17,1247.90 571.49,1268.02 574.82,1264.36 578.15,966.19 581.48,1265.28 584.81,1246.07 588.13,1227.77 591.46,1225.94 594.79,1241.49 598.12,1255.22 601.44,1266.65 604.77,1244.24 608.10,1251.56 611.43,1252.47 614.76,1260.70 618.08,1258.87 621.41,1257.04 624.74,1268.48 628.07,1250.64 631.39,1230.05 634.72,1255.22 638.05,1245.61 641.38,1247.90 644.71,1247.44 648.03,1255.22 651.36,1263.45 654.69,1257.96 658.02,1256.59 661.34,1264.36 664.67,1261.62 668.00,1262.99 671.33,1258.42 674.66,1262.08 677.98,1259.79 681.31,1259.79 684.64,1261.62 687.97,1269.40 691.29,1255.22 694.62,1262.53 697.95,1260.25 701.28,1264.36 704.61,1257.96 707.93,1265.74 711.26,1266.19 714.59,1265.28 717.92,1265.28 721.24,1257.04 724.57,1258.87" fill="none" stroke="#ef7061" stroke-width="3" stroke-linejoin="round"/>
<polygon points="724.57,1258.87 727.90,1150.00 727.90,1273 724.57,1273" fill="#a35488" fill-opacity="0.55"/>
<polyline points="724.87,1258.87 727.00,1091.17" fill="none" stroke="#ef7061" stroke-width="2.7" stroke-dasharray="2.6 3.3"/>
</g>
<rect x="128.9" y="1273" width="599" height="1.2" fill="#bdb4c7"/>
<rect x="131.5" y="1276.2" width="56.1" height="6.3" fill="#91aeea"/>
<rect x="311.2" y="1276.2" width="56.1" height="6.3" fill="#4679de"/>
<rect x="371.1" y="1276.2" width="56.1" height="6.3" fill="#d1dcf6"/>
<rect x="431" y="1276.2" width="56.1" height="6.3" fill="#2562d4"/>
<rect x="490.9" y="1276.2" width="56.1" height="6.3" fill="#2562d4"/>
<rect x="128.9" y="1283.95" width="599" height="1.5" fill="#71637e"/>
<rect x="157.95" y="1284.7" width="1.7" height="7.3" fill="#71637e"/>
<rect x="237.65" y="1284.7" width="1.7" height="7.3" fill="#71637e"/>
<rect x="317.85" y="1284.7" width="1.7" height="7.3" fill="#71637e"/>
<rect x="396.25" y="1284.7" width="1.7" height="7.3" fill="#71637e"/>
<rect x="476.25" y="1284.7" width="1.7" height="7.3" fill="#71637e"/>
<rect x="536.95" y="1284.7" width="1.7" height="7.3" fill="#71637e"/>
<rect x="617.15" y="1284.7" width="1.7" height="7.3" fill="#71637e"/>
<rect x="696.85" y="1284.7" width="1.7" height="7.3" fill="#71637e"/>
<path d="M1020.98 865.975 L1028 873.525 L1035.02 865.975" fill="none" stroke="#66587a" stroke-width="1.55" stroke-linecap="round" stroke-linejoin="round"/>
<circle cx="825.4" cy="904.3" r="6.4" fill="#444674"/>
<circle cx="1064.4" cy="904.3" r="6.4" fill="#a35488"/>
<circle cx="1297.8" cy="904.3" r="6.4" fill="#ef7061"/>
<path d="M1415 892.45 L1400.6 904.2 L1415 915.95 Z" fill="#71637e"/>
<path d="M1474.5 892.45 L1488.9 904.2 L1474.5 915.95 Z" fill="#3e3446"/>
<rect x="871.5" y="931.3" width="604.5" height="1.4" fill="#f7f6fa"/>
<rect x="871.5" y="1016.55" width="604.5" height="1.4" fill="#f7f6fa"/>
<rect x="871.5" y="1101.8" width="604.5" height="1.4" fill="#f7f6fa"/>
<rect x="871.5" y="1187.05" width="604.5" height="1.4" fill="#f7f6fa"/>
<clipPath id="cc"><rect x="870" y="925" width="606" height="351"/></clipPath><g clip-path="url(#cc)">
<polyline points="871.50,1266.19 874.86,1270.77 878.22,1243.32 881.58,1246.07 884.93,1268.21 888.29,1270.77 891.65,1259.33 895.01,1264.36 898.37,1261.62 901.73,1272.05 905.08,1270.77 908.44,1194.83 911.80,1187.51 915.16,1264.36 918.52,1269.49 921.88,1270.77 925.23,1270.77 928.59,1268.21 931.95,1270.13 935.31,1269.49 938.67,1269.49 942.02,1269.49 945.38,1268.85 948.74,1269.49 952.10,1270.77 955.46,1266.65 958.82,1268.21 962.17,1268.21 965.53,1270.77 968.89,1269.49 972.25,1267.11 975.61,1260.70 978.97,1268.21 982.33,1269.49 985.68,1270.77 989.04,1270.77 992.40,1236.92 995.76,1240.58 999.12,1259.79 1002.48,1269.49 1005.83,1271.41 1009.19,1271.41 1012.55,1272.05 1015.91,1272.05 1019.27,1272.05 1022.62,1272.05 1025.98,1271.41 1029.34,1270.13 1032.70,1270.13 1036.06,1270.77 1039.42,1272.05 1042.78,1272.05 1046.13,1267.57 1049.49,1272.05 1052.85,1271.41 1056.21,1267.57 1059.57,1269.49 1062.92,1272.05 1066.28,1270.77 1069.64,1269.49 1073.00,1270.77 1076.36,1272.05 1079.72,1272.05 1083.08,1271.41 1086.43,1270.77 1089.79,1269.49 1093.15,1268.85 1096.51,1268.21 1099.87,1248.81 1103.22,1266.65 1106.58,1268.21 1109.94,1271.41 1113.30,1272.05 1116.66,1270.77 1120.02,1271.79 1123.38,1271.79 1126.73,1271.41 1130.09,1270.13 1133.45,1269.49 1136.81,1272.05 1140.17,1272.05 1143.53,1270.13 1146.88,1269.49 1150.24,1265.74 1153.60,1268.85 1156.96,1269.49 1160.32,1265.28 1163.67,1271.41 1167.03,1271.41 1170.39,1270.13 1173.75,1268.21 1177.11,1235.54 1180.47,1270.77 1183.83,1271.41 1187.18,1269.49 1190.54,1265.28 1193.90,1259.79 1197.26,1267.11 1200.62,1269.49 1203.97,1271.41 1207.33,1270.77 1210.69,1271.41 1214.05,1271.79 1217.41,1272.05 1220.77,1271.79 1224.12,1271.41 1227.48,1270.77 1230.84,1271.79 1234.20,1271.41 1237.56,1270.13 1240.92,1270.77 1244.28,1272.05 1247.63,1271.79 1250.99,1269.49 1254.35,1215.42 1257.71,1269.49 1261.07,1270.13 1264.42,1271.41 1267.78,1270.77 1271.14,1266.65 1274.50,1269.49 1277.86,1271.41 1281.22,1270.13 1284.58,1268.21 1287.93,1270.77 1291.29,1271.41 1294.65,1270.77 1298.01,1270.13 1301.37,1269.49 1304.72,1269.49 1308.08,1266.19 1311.44,1259.79 1314.80,1259.33 1318.16,1266.65 1321.52,1268.21 1324.88,1270.77 1328.23,1269.49 1331.59,1263.45 1334.95,1253.39 1338.31,1252.01 1341.67,1257.04 1345.03,1263.45 1348.38,1268.21 1351.74,1236.46 1355.10,1255.22 1358.46,1269.49 1361.82,1270.13 1365.17,1267.11 1368.53,1270.77 1371.89,1271.41 1375.25,1269.49 1378.61,1251.56 1381.97,1254.30 1385.33,1250.18 1388.68,1254.30 1392.04,1260.70 1395.40,1262.08 1398.76,1266.65 1402.12,1267.57 1405.47,1269.49 1408.83,1269.49 1412.19,1270.77 1415.55,1267.11 1418.91,1269.49 1422.27,1270.13 1425.62,1270.13 1428.98,1271.41 1432.34,1271.41 1435.70,1270.77 1439.06,1268.21 1442.42,1270.13 1445.78,1270.13 1449.13,1270.77 1452.49,1269.49 1455.85,1267.11 1459.21,1270.13 1462.57,1270.77 1465.92,1270.77 1469.28,1269.49 1472.64,1268.21" fill="none" stroke="#444674" stroke-width="3.1" stroke-linejoin="round" stroke-linecap="round"/>
<polyline points="871.50,1270.77 874.86,1272.05 878.22,1269.49 881.58,1261.16 884.93,1269.49 888.29,1250.64 891.65,1230.51 895.01,1269.49 898.37,1244.69 901.73,1267.11 905.08,1270.77 908.44,1211.30 911.80,1264.36 915.16,1270.77 918.52,1259.79 921.88,1186.60 925.23,1270.77 928.59,1238.75 931.95,1269.49 935.31,1269.49 938.67,1212.67 942.02,1268.21 945.38,1268.21 948.74,1269.49 952.10,1270.13 955.46,1266.65 958.82,1265.74 962.17,1261.16 965.53,1270.13 968.89,1270.77 972.25,1263.45 975.61,1268.85 978.97,1267.11 982.33,1204.89 985.68,1269.49 989.04,1270.77 992.40,1269.49 995.76,1119.53 999.12,1257.96 1002.48,1272.05 1005.83,1272.05 1009.19,1268.21 1012.55,1272.05 1015.91,1272.05 1019.27,1267.11 1022.62,1272.05 1025.98,1272.05 1029.34,1272.05 1032.70,1270.77 1036.06,1266.65 1039.42,1272.05 1042.78,1272.05 1046.13,1270.77 1049.49,1272.05 1052.85,1272.05 1056.21,1272.05 1059.57,1271.41 1062.92,1272.05 1066.28,1267.11 1069.64,1270.77 1073.00,1272.05 1076.36,1272.05 1079.72,1271.41 1083.08,1269.49 1086.43,1272.05 1089.79,1270.77 1093.15,1270.13 1096.51,1270.13 1099.87,1272.05 1103.22,1272.05 1106.58,1272.05 1109.94,1270.77 1113.30,1272.05 1116.66,1272.05 1120.02,1272.05 1123.38,1271.41 1126.73,1268.21 1130.09,1271.41 1133.45,1272.05 1136.81,1272.05 1140.17,1270.77 1143.53,1253.84 1146.88,1268.21 1150.24,1269.49 1153.60,1269.49 1156.96,1265.28 1160.32,1258.87 1163.67,1270.77 1167.03,1272.05 1170.39,1272.05 1173.75,1268.21 1177.11,1243.32 1180.47,1270.77 1183.83,1272.05 1187.18,1272.05 1190.54,1271.41 1193.90,1270.13 1197.26,1269.49 1200.62,1241.03 1203.97,1270.77 1207.33,1270.77 1210.69,1267.11 1214.05,1272.05 1217.41,1272.05 1220.77,1270.77 1224.12,1265.74 1227.48,1271.41 1230.84,1272.05 1234.20,1271.41 1237.56,1270.77 1240.92,1269.49 1244.28,1272.05 1247.63,1271.41 1250.99,1269.49 1254.35,1239.20 1257.71,1270.77 1261.07,1272.05 1264.42,1272.05 1267.78,1272.05 1271.14,1271.41 1274.50,1269.49 1277.86,1262.08 1281.22,1266.19 1284.58,1266.65 1287.93,1270.13 1291.29,1269.49 1294.65,1271.41 1298.01,1270.13 1301.37,1268.21 1304.72,1267.11 1308.08,1261.62 1311.44,1263.45 1314.80,1263.45 1318.16,1270.77 1321.52,1268.21 1324.88,940.58 1328.23,1268.21 1331.59,1267.57 1334.95,1268.21 1338.31,1272.05 1341.67,1272.05 1345.03,1261.16 1348.38,1269.49 1351.74,1264.82 1355.10,1270.77 1358.46,1268.21 1361.82,1263.45 1365.17,1263.91 1368.53,1262.08 1371.89,1268.21 1375.25,1257.96 1378.61,1272.05 1381.97,1272.69 1385.33,1271.41 1388.68,1272.05 1392.04,1270.13 1395.40,1272.05 1398.76,1270.77 1402.12,1257.04 1405.47,1251.56 1408.83,1262.99 1412.19,1257.04 1415.55,1260.70 1418.91,1249.27 1422.27,1264.36 1425.62,1261.16 1428.98,1257.96 1432.34,1264.82 1435.70,1270.77 1439.06,1256.13 1442.42,1267.11 1445.78,1259.79 1449.13,1268.85 1452.49,1264.36 1455.85,1267.11 1459.21,1268.85 1462.57,1268.21 1465.92,1267.11 1469.28,1259.79 1472.64,1270.13" fill="none" stroke="#a35488" stroke-width="3.1" stroke-linejoin="round" stroke-linecap="round"/>
</g>
<rect x="871.5" y="1272.8" width="604.5" height="1.6" fill="#c96a6e"/>
<rect x="871.5" y="1270.9" width="604.5" height="2.6" fill="#ef7061"/>
<rect x="874.1" y="1276.2" width="56.65" height="6.3" fill="#91aeea"/>
<rect x="1055.45" y="1276.2" width="56.65" height="6.3" fill="#4679de"/>
<rect x="1115.9" y="1276.2" width="56.65" height="6.3" fill="#d1dcf6"/>
<rect x="1176.35" y="1276.2" width="56.65" height="6.3" fill="#2562d4"/>
<rect x="1236.8" y="1276.2" width="56.65" height="6.3" fill="#2562d4"/>
<rect x="871.5" y="1283.95" width="604.5" height="1.5" fill="#71637e"/>
<rect x="900.35" y="1284.7" width="1.7" height="7.3" fill="#71637e"/>
<rect x="980.35" y="1284.7" width="1.7" height="7.3" fill="#71637e"/>
<rect x="1061.95" y="1284.7" width="1.7" height="7.3" fill="#71637e"/>
<rect x="1141.85" y="1284.7" width="1.7" height="7.3" fill="#71637e"/>
<rect x="1223.15" y="1284.7" width="1.7" height="7.3" fill="#71637e"/>
<rect x="1282.55" y="1284.7" width="1.7" height="7.3" fill="#71637e"/>
<rect x="1364.15" y="1284.7" width="1.7" height="7.3" fill="#71637e"/>
<rect x="1444.05" y="1284.7" width="1.7" height="7.3" fill="#71637e"/>
<path d="M1728.58 865.975 L1735.6 873.525 L1742.62 865.975" fill="none" stroke="#66587a" stroke-width="1.55" stroke-linecap="round" stroke-linejoin="round"/>
<circle cx="1574.5" cy="904.3" r="6.4" fill="#444674"/>
<circle cx="1787.7" cy="904.3" r="6.4" fill="#a35488"/>
<circle cx="1995.2" cy="904.3" r="6.4" fill="#ef7061"/>
<path d="M2163.8 892.45 L2149.3 904.2 L2163.8 915.95 Z" fill="#71637e"/>
<path d="M2222.9 892.45 L2237.3 904.2 L2222.9 915.95 Z" fill="#3e3446"/>
<rect x="1612" y="931.3" width="613" height="1.4" fill="#f7f6fa"/>
<rect x="1612" y="988.133" width="613" height="1.4" fill="#f7f6fa"/>
<rect x="1612" y="1044.97" width="613" height="1.4" fill="#f7f6fa"/>
<rect x="1612" y="1101.8" width="613" height="1.4" fill="#f7f6fa"/>
<rect x="1612" y="1158.63" width="613" height="1.4" fill="#f7f6fa"/>
<rect x="1612" y="1215.46" width="613" height="1.4" fill="#f7f6fa"/>
<clipPath id="ck"><rect x="1612" y="925" width="613" height="351"/></clipPath><g clip-path="url(#ck)">
<polyline points="1612.00,1273.00 1615.41,1273.00 1618.81,1273.00 1622.22,1273.00 1625.62,1273.00 1629.03,1273.00 1632.43,1273.00 1635.84,1159.33 1639.24,1273.00 1642.65,1273.00 1646.06,1273.00 1649.46,1273.00 1652.87,1273.00 1656.27,1273.00 1659.68,1273.00 1663.08,1273.00 1666.49,1273.00 1669.89,1273.00 1673.30,1273.00 1676.71,1273.00 1680.11,1273.00 1683.52,1273.00 1686.92,1273.00 1690.33,1273.00 1693.73,1273.00 1697.14,1273.00 1700.54,1273.00 1703.95,1273.00 1707.36,1273.00 1710.76,1273.00 1714.17,1273.00 1717.57,1273.00 1720.98,1273.00 1724.38,1273.00 1727.79,1273.00 1731.19,1273.00 1734.60,1273.00 1738.01,1273.00 1741.41,1273.00 1744.82,1273.00 1748.22,1273.00 1751.63,1273.00 1755.03,1273.00 1758.44,1273.00 1761.84,1273.00 1765.25,1273.00 1768.66,1273.00 1772.06,1273.00 1775.47,1273.00 1778.87,1273.00 1782.28,1273.00 1785.68,1273.00 1789.09,1273.00 1792.49,1273.00 1795.90,1273.00 1799.31,1273.00 1802.71,1273.00 1806.12,1273.00 1809.52,1273.00 1812.93,1273.00 1816.33,1273.00 1819.74,1273.00 1823.14,1273.00 1826.55,1273.00 1829.96,1273.00 1833.36,1273.00 1836.77,1273.00 1840.17,1273.00 1843.58,1273.00 1846.98,1273.00 1850.39,1273.00 1853.79,1273.00 1857.20,1273.00 1860.61,1273.00 1864.01,1273.00 1867.42,1273.00 1870.82,1159.33 1874.23,1273.00 1877.63,1273.00 1881.04,1273.00 1884.44,1273.00 1887.85,1273.00 1891.26,1273.00 1894.66,1273.00 1898.07,1273.00 1901.47,1273.00 1904.88,1273.00 1908.28,1273.00 1911.69,1273.00 1915.09,1273.00 1918.50,1273.00 1921.91,1273.00 1925.31,1273.00 1928.72,1273.00 1932.12,1273.00 1935.53,1273.00 1938.93,1273.00 1942.34,1273.00 1945.74,1273.00 1949.15,1273.00 1952.56,1273.00 1955.96,1273.00 1959.37,1273.00 1962.77,1273.00 1966.18,1273.00 1969.58,1273.00 1972.99,1273.00 1976.39,1273.00 1979.80,1273.00 1983.21,1273.00 1986.61,1273.00 1990.02,1273.00 1993.42,1273.00 1996.83,1159.33 2000.23,1273.00 2003.64,1273.00 2007.04,1273.00 2010.45,1273.00 2013.86,1273.00 2017.26,1273.00 2020.67,1273.00 2024.07,1273.00 2027.48,1273.00 2030.88,1273.00 2034.29,1273.00 2037.69,1273.00 2041.10,1273.00 2044.51,1273.00 2047.91,1273.00 2051.32,1273.00 2054.72,1273.00 2058.13,1273.00 2061.53,1273.00 2064.94,1273.00 2068.34,1273.00 2071.75,1273.00 2075.16,1273.00 2078.56,1273.00 2081.97,1273.00 2085.37,1273.00 2088.78,1273.00 2092.18,1273.00 2095.59,1273.00 2098.99,1273.00 2102.40,1273.00 2105.81,1273.00 2109.21,1273.00 2112.62,1273.00 2116.02,1273.00 2119.43,1273.00 2122.83,1273.00 2126.24,1273.00 2129.64,1273.00 2133.05,1273.00 2136.46,1273.00 2139.86,1273.00 2143.27,1273.00 2146.67,1273.00 2150.08,1273.00 2153.48,1273.00 2156.89,1273.00 2160.29,1273.00 2163.70,1273.00 2167.11,1273.00 2170.51,1273.00 2173.92,1273.00 2177.32,1273.00 2180.73,1273.00 2184.13,1273.00 2187.54,1273.00 2190.94,1273.00 2194.35,1273.00 2197.76,1273.00 2201.16,1273.00 2204.57,1273.00 2207.97,1273.00 2211.38,1273.00 2214.78,1273.00 2218.19,1273.00 2221.59,1273.00" fill="none" stroke="#a35488" stroke-width="3.1" stroke-linejoin="round"/>
<polyline points="1612.00,1159.33 1615.41,1273.00 1618.81,1273.00 1622.22,1273.00 1625.62,1273.00 1629.03,1159.33 1632.43,1159.33 1635.84,1273.00 1639.24,1159.33 1642.65,1273.00 1646.06,1159.33 1649.46,1273.00 1652.87,1273.00 1656.27,1273.00 1659.68,1273.00 1663.08,1273.00 1666.49,1273.00 1669.89,1273.00 1673.30,1273.00 1676.71,1273.00 1680.11,1159.33 1683.52,1273.00 1686.92,1273.00 1690.33,1273.00 1693.73,1273.00 1697.14,1159.33 1700.54,1273.00 1703.95,1273.00 1707.36,1273.00 1710.76,1273.00 1714.17,1273.00 1717.57,1273.00 1720.98,1159.33 1724.38,1273.00 1727.79,1273.00 1731.19,1273.00 1734.60,1273.00 1738.01,1159.33 1741.41,1159.33 1744.82,1273.00 1748.22,1273.00 1751.63,1159.33 1755.03,1273.00 1758.44,1273.00 1761.84,1159.33 1765.25,1273.00 1768.66,1273.00 1772.06,1273.00 1775.47,1273.00 1778.87,1159.33 1782.28,1273.00 1785.68,1273.00 1789.09,1273.00 1792.49,1273.00 1795.90,1159.33 1799.31,1159.33 1802.71,1273.00 1806.12,1273.00 1809.52,1159.33 1812.93,1273.00 1816.33,1273.00 1819.74,1273.00 1823.14,1273.00 1826.55,1273.00 1829.96,1273.00 1833.36,1159.33 1836.77,1273.00 1840.17,1273.00 1843.58,1273.00 1846.98,1273.00 1850.39,1159.33 1853.79,1159.33 1857.20,1273.00 1860.61,1273.00 1864.01,1273.00 1867.42,1273.00 1870.82,1273.00 1874.23,1159.33 1877.63,1273.00 1881.04,1273.00 1884.44,1273.00 1887.85,1273.00 1891.26,1273.00 1894.66,1273.00 1898.07,1273.00 1901.47,1273.00 1904.88,1273.00 1908.28,1273.00 1911.69,1273.00 1915.09,1273.00 1918.50,1273.00 1921.91,1045.67 1925.31,1273.00 1928.72,1273.00 1932.12,1273.00 1935.53,1273.00 1938.93,932.00 1942.34,1273.00 1945.74,1273.00 1949.15,1273.00 1952.56,1273.00 1955.96,1159.33 1959.37,1273.00 1962.77,1273.00 1966.18,1273.00 1969.58,1159.33 1972.99,1273.00 1976.39,1273.00 1979.80,1273.00 1983.21,1273.00 1986.61,1159.33 1990.02,1273.00 1993.42,1273.00 1996.83,1273.00 2000.23,1159.33 2003.64,1159.33 2007.04,1273.00 2010.45,1273.00 2013.86,1159.33 2017.26,1273.00 2020.67,1273.00 2024.07,1273.00 2027.48,1159.33 2030.88,1273.00 2034.29,1273.00 2037.69,1273.00 2041.10,1273.00 2044.51,1159.33 2047.91,1273.00 2051.32,1159.33 2054.72,1273.00 2058.13,1159.33 2061.53,1273.00 2064.94,1159.33 2068.34,1159.33 2071.75,1273.00 2075.16,1273.00 2078.56,1273.00 2081.97,1159.33 2085.37,1273.00 2088.78,1159.33 2092.18,1273.00 2095.59,1273.00 2098.99,1273.00 2102.40,1159.33 2105.81,1159.33 2109.21,1273.00 2112.62,1273.00 2116.02,1273.00 2119.43,1273.00 2122.83,1273.00 2126.24,1273.00 2129.64,1273.00 2133.05,1159.33 2136.46,1273.00 2139.86,1273.00 2143.27,1273.00 2146.67,1273.00 2150.08,1159.33 2153.48,1273.00 2156.89,1273.00 2160.29,1273.00 2163.70,1273.00 2167.11,1273.00 2170.51,1273.00 2173.92,1159.33 2177.32,1273.00 2180.73,1273.00 2184.13,1273.00 2187.54,1273.00 2190.94,1159.33 2194.35,1159.33 2197.76,1273.00 2201.16,1273.00 2204.57,1273.00 2207.97,1273.00 2211.38,1273.00 2214.78,1273.00 2218.19,1273.00 2221.59,1273.00" fill="none" stroke="#444674" stroke-width="3.1" stroke-linejoin="round"/>
</g>
<rect x="1612" y="1272.8" width="613" height="1.6" fill="#c96a6e"/>
<rect x="1612" y="1270.9" width="613" height="2.6" fill="#ef7061"/>
<rect x="1614.6" y="1276.2" width="57.5" height="6.3" fill="#91aeea"/>
<rect x="1798.5" y="1276.2" width="57.5" height="6.3" fill="#4679de"/>
<rect x="1859.8" y="1276.2" width="57.5" height="6.3" fill="#d1dcf6"/>
<rect x="1921.1" y="1276.2" width="57.5" height="6.3" fill="#2562d4"/>
<rect x="1982.4" y="1276.2" width="57.5" height="6.3" fill="#2562d4"/>
<rect x="1612" y="1283.95" width="613" height="1.5" fill="#71637e"/>
<rect x="1641.55" y="1284.7" width="1.7" height="7.3" fill="#71637e"/>
<rect x="1723.15" y="1284.7" width="1.7" height="7.3" fill="#71637e"/>
<rect x="1804.45" y="1284.7" width="1.7" height="7.3" fill="#71637e"/>
<rect x="1885.95" y="1284.7" width="1.7" height="7.3" fill="#71637e"/>
<rect x="1967.45" y="1284.7" width="1.7" height="7.3" fill="#71637e"/>
<rect x="2030.25" y="1284.7" width="1.7" height="7.3" fill="#71637e"/>
<rect x="2111.55" y="1284.7" width="1.7" height="7.3" fill="#71637e"/>
<rect x="2193.15" y="1284.7" width="1.7" height="7.3" fill="#71637e"/>
</svg>
<div style="position:absolute;left:2222px;top:665px;width:64px;height:64px;box-sizing:border-box;border-radius:32px;background:#fff;border:1px solid #e0dce5;box-shadow:0 1px 2px rgba(43,34,51,.05)"></div>
<svg style="position:absolute;left:2243px;top:685px" width="24" height="24" viewBox="0 0 24 24"><g transform="scale(1.375)" fill="none" stroke="#2b2233" stroke-width="1.55" stroke-linejoin="round" stroke-linecap="round"><path d="M0.85 2.9 H6.7 L9.85 0.8 H12.5 V11.25 H9.85 L6.7 8.9 H0.85 Z"/><path d="M1.45 8.9 V15.4 H5.4 V8.9"/><path d="M12.5 2.9 A3 3 0 0 1 12.5 8.9"/></g></svg>
<div id="txt" style="position:absolute;left:0;top:0;width:2304px;height:1388px;will-change:transform">
<span class="t" style="left:44.40px;top:32.14px;font-size:40px;line-height:40px;color:#2b2233;font-weight:bold;transform:scaleX(1.0482);">Frontend</span>
<span class="t" style="left:43.20px;top:125.68px;font-size:22px;line-height:22px;color:#3e3446;-webkit-text-stroke:0.40px #3e3446;transform:scaleX(1.0463);">Overview</span>
<span class="t" style="left:166.00px;top:125.68px;font-size:22px;line-height:22px;color:#3e3446;-webkit-text-stroke:0.40px #3e3446;transform:scaleX(1.0062);">Web Vitals</span>
<span class="t" style="left:296.69px;top:125.68px;font-size:22px;line-height:22px;color:#3e3446;-webkit-text-stroke:0.40px #3e3446;transform:scaleX(1.0602);">Network Requests</span>
<span class="t" style="left:514.00px;top:125.68px;font-size:22px;line-height:22px;color:#3e3446;-webkit-text-stroke:0.40px #3e3446;transform:scaleX(1.0527);">Assets</span>
<span class="t" style="left:609.15px;top:125.78px;font-size:22px;line-height:22px;color:#6c5fc7;-webkit-text-stroke:0.40px #6c5fc7;transform:scaleX(1.0533);">Session Health</span>
<span class="t" style="left:859.93px;top:125.68px;font-size:22px;line-height:22px;color:#3e3446;-webkit-text-stroke:0.40px #3e3446;transform:scaleX(1.0744);">Uptime Monitors</span>
<span class="t" style="left:790.36px;top:129.09px;font-size:17.5px;line-height:17.5px;color:#fff;-webkit-text-stroke:0.32px #fff;transform:scaleX(1.0361);">new</span>
<span class="t" style="left:2088.00px;top:38.50px;font-size:21.5px;line-height:21.5px;color:#3e3446;font-weight:bold;transform:scaleX(1.0256);">Give Feedback</span>
<span class="t" style="left:108.32px;top:223.38px;font-size:22px;line-height:22px;color:#3e3446;font-weight:bold;transform:scaleX(1.0778);">peated</span>
<span class="t" style="left:253.40px;top:223.38px;font-size:22px;line-height:22px;color:#3e3446;font-weight:bold;transform:scaleX(0.9726);">All Envs</span>
<span class="t" style="left:407.10px;top:223.38px;font-size:22px;line-height:22px;color:#3e3446;font-weight:bold;transform:scaleX(1.1046);">30D</span>
<span class="t" style="left:71.45px;top:317.78px;font-size:24px;line-height:24px;color:#382e43;font-weight:bold;transform:scaleX(1.0495);">Issues</span>
<span class="t" style="left:90.10px;top:354.56px;font-size:17.3px;line-height:17.3px;color:#3e3446;-webkit-text-stroke:0.31px #3e3446;transform:scaleX(1.0964);">new_issues</span>
<span class="t" style="left:229.32px;top:354.56px;font-size:17.3px;line-height:17.3px;color:#3e3446;-webkit-text-stroke:0.31px #3e3446;transform:scaleX(1.0846);">resolved_issues</span>
<span class="t" style="left:74.50px;top:382.60px;font-size:18px;line-height:18px;color:#71637e;-webkit-text-stroke:0.32px #71637e;">8</span>
<span class="t" style="left:74.50px;top:408.85px;font-size:18px;line-height:18px;color:#71637e;-webkit-text-stroke:0.32px #71637e;">6</span>
<span class="t" style="left:74.50px;top:434.35px;font-size:18px;line-height:18px;color:#71637e;-webkit-text-stroke:0.32px #71637e;">4</span>
<span class="t" style="left:74.50px;top:459.85px;font-size:18px;line-height:18px;color:#71637e;-webkit-text-stroke:0.32px #71637e;">2</span>
<span class="t" style="left:74.50px;top:485.35px;font-size:18px;line-height:18px;color:#71637e;-webkit-text-stroke:0.32px #71637e;">0</span>
<span class="t" style="left:117.58px;top:513.35px;font-size:18px;line-height:18px;color:#71637e;-webkit-text-stroke:0.32px #71637e;transform:scaleX(1.1243);">Mar 13th</span>
<span class="t" style="left:247.97px;top:513.35px;font-size:18px;line-height:18px;color:#71637e;-webkit-text-stroke:0.32px #71637e;transform:scaleX(1.1272);">Mar 17th</span>
<span class="t" style="left:379.99px;top:513.35px;font-size:18px;line-height:18px;color:#71637e;-webkit-text-stroke:0.32px #71637e;transform:scaleX(1.1127);">Mar 21st</span>
<span class="t" style="left:509.02px;top:513.35px;font-size:18px;line-height:18px;color:#71637e;-webkit-text-stroke:0.32px #71637e;transform:scaleX(1.1330);">Mar 25th</span>
<span class="t" style="left:640.58px;top:513.35px;font-size:18px;line-height:18px;color:#71637e;-webkit-text-stroke:0.32px #71637e;transform:scaleX(1.1243);">Mar 29th</span>
<span class="t" style="left:746.50px;top:513.35px;font-size:18px;line-height:18px;color:#71637e;-webkit-text-stroke:0.32px #71637e;transform:scaleX(1.1048);">Apr 1st</span>
<span class="t" style="left:876.85px;top:513.35px;font-size:18px;line-height:18px;color:#71637e;-webkit-text-stroke:0.32px #71637e;transform:scaleX(1.1276);">Apr 5th</span>
<span class="t" style="left:1006.70px;top:513.35px;font-size:18px;line-height:18px;color:#71637e;-webkit-text-stroke:0.32px #71637e;transform:scaleX(1.1294);">Apr 9th</span>
<span class="t" style="left:64.25px;top:572.81px;font-size:22.2px;line-height:22.2px;color:#2b2233;font-weight:bold;transform:scaleX(0.9824);">TRPCError</span>
<span class="t" style="left:78.70px;top:607.57px;font-size:21.3px;line-height:21.3px;color:#3e3446;-webkit-text-stroke:0.38px #3e3446;transform:scaleX(1.1868);">client_login_timeout</span>
<span class="t" style="left:87.22px;top:641.64px;font-size:16.6px;line-height:16.6px;color:#75677f;-webkit-text-stroke:0.30px #75677f;transform:scaleX(1.0799);">PEATED-348</span>
<span class="t" style="left:214.11px;top:640.59px;font-size:17.8px;line-height:17.8px;color:#cc1f2c;-webkit-text-stroke:0.32px #cc1f2c;transform:scaleX(1.1441);">Unhandled</span>
<span class="t" style="left:333.50px;top:640.62px;font-size:17.8px;line-height:17.8px;color:#71637e;-webkit-text-stroke:0.32px #71637e;transform:scaleX(1.1773);">GET /trpc/entityById</span>
<span class="t" style="left:64.25px;top:698.81px;font-size:22.2px;line-height:22.2px;color:#2b2233;font-weight:bold;transform:scaleX(0.9824);">TRPCError</span>
<span class="t" style="left:78.70px;top:733.57px;font-size:21.3px;line-height:21.3px;color:#3e3446;-webkit-text-stroke:0.38px #3e3446;transform:scaleX(1.1868);">client_login_timeout</span>
<span class="t" style="left:87.28px;top:767.64px;font-size:16.6px;line-height:16.6px;color:#75677f;-webkit-text-stroke:0.30px #75677f;transform:scaleX(1.0151);">PEATED-31R</span>
<span class="t" style="left:211.11px;top:766.59px;font-size:17.8px;line-height:17.8px;color:#cc1f2c;-webkit-text-stroke:0.32px #cc1f2c;transform:scaleX(1.1382);">Unhandled</span>
<span class="t" style="left:330.00px;top:766.62px;font-size:17.8px;line-height:17.8px;color:#71637e;-webkit-text-stroke:0.32px #71637e;transform:scaleX(1.1807);">GET /trpc/bottleList</span>
<span class="t" style="left:557.25px;top:765.63px;font-size:18.5px;line-height:18.5px;color:#71637e;-webkit-text-stroke:0.33px #71637e;">2</span>
<span class="t" style="left:1194.67px;top:317.68px;font-size:24px;line-height:24px;color:#382e43;font-weight:bold;transform:scaleX(1.0761);">User Health</span>
<span class="t" style="left:1213.09px;top:354.56px;font-size:17.3px;line-height:17.3px;color:#3e3446;-webkit-text-stroke:0.31px #3e3446;transform:scaleX(1.1612);">rate_crashed(user)</span>
<span class="t" style="left:1411.84px;top:354.56px;font-size:17.3px;line-height:17.3px;color:#3e3446;-webkit-text-stroke:0.31px #3e3446;transform:scaleX(1.1609);">rate_errored(user)</span>
<span class="t" style="left:1604.35px;top:354.56px;font-size:17.3px;line-height:17.3px;color:#3e3446;-webkit-text-stroke:0.31px #3e3446;transform:scaleX(1.1547);">rate_abnormal(user)</span>
<span class="t" style="left:1814.33px;top:354.67px;font-size:17.3px;line-height:17.3px;color:#80708f;-webkit-text-stroke:0.31px #80708f;transform:scaleX(1.1734);">rate_healthy(user)</span>
<span class="t" style="left:2009.00px;top:354.56px;font-size:17.3px;line-height:17.3px;color:#3e3446;-webkit-text-stroke:0.31px #3e3446;transform:scaleX(1.0048);">Releases</span>
<span class="t" style="left:1193.13px;top:383.35px;font-size:18px;line-height:18px;color:#71637e;-webkit-text-stroke:0.32px #71637e;transform:scaleX(1.0726);">100%</span>
<span class="t" style="left:1205.80px;top:451.35px;font-size:18px;line-height:18px;color:#71637e;-webkit-text-stroke:0.32px #71637e;transform:scaleX(1.0188);">80%</span>
<span class="t" style="left:1205.80px;top:519.35px;font-size:18px;line-height:18px;color:#71637e;-webkit-text-stroke:0.32px #71637e;transform:scaleX(1.0188);">60%</span>
<span class="t" style="left:1205.80px;top:587.35px;font-size:18px;line-height:18px;color:#71637e;-webkit-text-stroke:0.32px #71637e;transform:scaleX(1.0188);">40%</span>
<span class="t" style="left:1205.80px;top:655.35px;font-size:18px;line-height:18px;color:#71637e;-webkit-text-stroke:0.32px #71637e;transform:scaleX(1.0188);">20%</span>
<span class="t" style="left:1232.50px;top:723.35px;font-size:18px;line-height:18px;color:#71637e;-webkit-text-stroke:0.32px #71637e;">0</span>
<span class="t" style="left:1263.23px;top:763.85px;font-size:18px;line-height:18px;color:#71637e;-webkit-text-stroke:0.32px #71637e;transform:scaleX(1.1243);">Mar 13th</span>
<span class="t" style="left:1390.87px;top:763.85px;font-size:18px;line-height:18px;color:#71637e;-webkit-text-stroke:0.32px #71637e;transform:scaleX(1.1272);">Mar 17th</span>
<span class="t" style="left:1521.14px;top:763.85px;font-size:18px;line-height:18px;color:#71637e;-webkit-text-stroke:0.32px #71637e;transform:scaleX(1.1127);">Mar 21st</span>
<span class="t" style="left:1649.92px;top:763.85px;font-size:18px;line-height:18px;color:#71637e;-webkit-text-stroke:0.32px #71637e;transform:scaleX(1.1330);">Mar 25th</span>
<span class="t" style="left:1779.98px;top:763.85px;font-size:18px;line-height:18px;color:#71637e;-webkit-text-stroke:0.32px #71637e;transform:scaleX(1.1243);">Mar 29th</span>
<span class="t" style="left:1884.40px;top:763.85px;font-size:18px;line-height:18px;color:#71637e;-webkit-text-stroke:0.32px #71637e;transform:scaleX(1.1048);">Apr 1st</span>
<span class="t" style="left:2013.00px;top:763.85px;font-size:18px;line-height:18px;color:#71637e;-webkit-text-stroke:0.32px #71637e;transform:scaleX(1.1276);">Apr 5th</span>
<span class="t" style="left:2142.95px;top:763.85px;font-size:18px;line-height:18px;color:#71637e;-webkit-text-stroke:0.32px #71637e;transform:scaleX(1.1294);">Apr 9th</span>
<span class="t" style="left:71.50px;top:859.38px;font-size:24px;line-height:24px;color:#382e43;font-weight:bold;transform:scaleX(1.0677);">Session Health</span>
<span class="t" style="left:90.26px;top:895.56px;font-size:17.3px;line-height:17.3px;color:#3e3446;-webkit-text-stroke:0.31px #3e3446;transform:scaleX(1.1382);">rate_crashed(session)</span>
<span class="t" style="left:314.36px;top:895.56px;font-size:17.3px;line-height:17.3px;color:#3e3446;-webkit-text-stroke:0.31px #3e3446;transform:scaleX(1.1435);">rate_errored(session)</span>
<div style="position:absolute;left:0;top:0;width:632.5px;height:1388px;overflow:hidden"><span class="t" style="left:533.36px;top:895.56px;font-size:17.3px;line-height:17.3px;color:#3e3446;-webkit-text-stroke:0.31px #3e3446;transform:scaleX(1.1403);">rate_abnormal(session)</span></div>
<span class="t" style="left:682.88px;top:895.74px;font-size:18.5px;line-height:18.5px;color:#3e3446;-webkit-text-stroke:0.33px #3e3446;transform:scaleX(1.0234);">1/2</span>
<span class="t" style="left:72.66px;top:923.35px;font-size:18px;line-height:18px;color:#71637e;-webkit-text-stroke:0.32px #71637e;transform:scaleX(1.0444);">1.5%</span>
<span class="t" style="left:72.66px;top:990.95px;font-size:18px;line-height:18px;color:#71637e;-webkit-text-stroke:0.32px #71637e;transform:scaleX(1.0444);">1.2%</span>
<span class="t" style="left:73.10px;top:1059.55px;font-size:18px;line-height:18px;color:#71637e;-webkit-text-stroke:0.32px #71637e;transform:scaleX(1.0336);">0.9%</span>
<span class="t" style="left:73.10px;top:1128.15px;font-size:18px;line-height:18px;color:#71637e;-webkit-text-stroke:0.32px #71637e;transform:scaleX(1.0336);">0.6%</span>
<span class="t" style="left:73.10px;top:1195.75px;font-size:18px;line-height:18px;color:#71637e;-webkit-text-stroke:0.32px #71637e;transform:scaleX(1.0336);">0.3%</span>
<span class="t" style="left:105.50px;top:1264.35px;font-size:18px;line-height:18px;color:#71637e;-webkit-text-stroke:0.32px #71637e;">0</span>
<span class="t" style="left:117.58px;top:1305.05px;font-size:18px;line-height:18px;color:#71637e;-webkit-text-stroke:0.32px #71637e;transform:scaleX(1.1243);">Mar 13th</span>
<span class="t" style="left:277.89px;top:1305.05px;font-size:18px;line-height:18px;color:#71637e;-webkit-text-stroke:0.32px #71637e;transform:scaleX(1.1127);">Mar 21st</span>
<span class="t" style="left:505.00px;top:1305.05px;font-size:18px;line-height:18px;color:#71637e;-webkit-text-stroke:0.32px #71637e;transform:scaleX(1.1048);">Apr 1st</span>
<span class="t" style="left:584.55px;top:1305.05px;font-size:18px;line-height:18px;color:#71637e;-webkit-text-stroke:0.32px #71637e;transform:scaleX(1.1276);">Apr 5th</span>
<span class="t" style="left:664.20px;top:1305.05px;font-size:18px;line-height:18px;color:#71637e;-webkit-text-stroke:0.32px #71637e;transform:scaleX(1.1294);">Apr 9th</span>
<span class="t" style="left:820.30px;top:859.38px;font-size:24px;line-height:24px;color:#382e43;font-weight:bold;transform:scaleX(1.0502);">Session Counts</span>
<span class="t" style="left:840.20px;top:895.56px;font-size:17.3px;line-height:17.3px;color:#3e3446;-webkit-text-stroke:0.31px #3e3446;transform:scaleX(1.1389);">count_crashed(session)</span>
<span class="t" style="left:1079.50px;top:895.56px;font-size:17.3px;line-height:17.3px;color:#3e3446;-webkit-text-stroke:0.31px #3e3446;transform:scaleX(1.1399);">count_errored(session)</span>
<div style="position:absolute;left:0;top:0;width:1381.7px;height:1388px;overflow:hidden"><span class="t" style="left:1312.60px;top:895.56px;font-size:17.3px;line-height:17.3px;color:#3e3446;-webkit-text-stroke:0.31px #3e3446;transform:scaleX(1.1382);">count_abnormal(session)</span></div>
<span class="t" style="left:1431.70px;top:895.74px;font-size:18.5px;line-height:18.5px;color:#3e3446;-webkit-text-stroke:0.33px #3e3446;">1/3</span>
<span class="t" style="left:823.50px;top:923.35px;font-size:18px;line-height:18px;color:#71637e;-webkit-text-stroke:0.32px #71637e;transform:scaleX(1.1558);">800</span>
<span class="t" style="left:823.50px;top:1008.10px;font-size:18px;line-height:18px;color:#71637e;-webkit-text-stroke:0.32px #71637e;transform:scaleX(1.1558);">600</span>
<span class="t" style="left:823.50px;top:1093.85px;font-size:18px;line-height:18px;color:#71637e;-webkit-text-stroke:0.32px #71637e;transform:scaleX(1.1558);">400</span>
<span class="t" style="left:824.00px;top:1178.60px;font-size:18px;line-height:18px;color:#71637e;-webkit-text-stroke:0.32px #71637e;transform:scaleX(1.1392);">200</span>
<span class="t" style="left:848.20px;top:1264.35px;font-size:18px;line-height:18px;color:#71637e;-webkit-text-stroke:0.32px #71637e;">0</span>
<span class="t" style="left:860.78px;top:1305.05px;font-size:18px;line-height:18px;color:#71637e;-webkit-text-stroke:0.32px #71637e;transform:scaleX(1.1243);">Mar 13th</span>
<span class="t" style="left:1022.79px;top:1305.05px;font-size:18px;line-height:18px;color:#71637e;-webkit-text-stroke:0.32px #71637e;transform:scaleX(1.1127);">Mar 21st</span>
<span class="t" style="left:1251.40px;top:1305.05px;font-size:18px;line-height:18px;color:#71637e;-webkit-text-stroke:0.32px #71637e;transform:scaleX(1.1048);">Apr 1st</span>
<span class="t" style="left:1332.35px;top:1305.05px;font-size:18px;line-height:18px;color:#71637e;-webkit-text-stroke:0.32px #71637e;transform:scaleX(1.1276);">Apr 5th</span>
<span class="t" style="left:1412.20px;top:1305.05px;font-size:18px;line-height:18px;color:#71637e;-webkit-text-stroke:0.32px #71637e;transform:scaleX(1.1294);">Apr 9th</span>
<span class="t" style="left:1568.34px;top:859.38px;font-size:24px;line-height:24px;color:#382e43;font-weight:bold;transform:scaleX(1.0627);">User Counts</span>
<span class="t" style="left:1589.00px;top:895.56px;font-size:17.3px;line-height:17.3px;color:#3e3446;-webkit-text-stroke:0.31px #3e3446;transform:scaleX(1.1538);">count_crashed(user)</span>
<span class="t" style="left:1802.50px;top:895.56px;font-size:17.3px;line-height:17.3px;color:#3e3446;-webkit-text-stroke:0.31px #3e3446;transform:scaleX(1.1562);">count_errored(user)</span>
<div style="position:absolute;left:0;top:0;width:2130px;height:1388px;overflow:hidden"><span class="t" style="left:2010.30px;top:895.56px;font-size:17.3px;line-height:17.3px;color:#3e3446;-webkit-text-stroke:0.31px #3e3446;transform:scaleX(1.1527);">count_abnormal(user)</span></div>
<span class="t" style="left:2180.38px;top:895.74px;font-size:18.5px;line-height:18.5px;color:#3e3446;-webkit-text-stroke:0.33px #3e3446;transform:scaleX(1.0152);">1/2</span>
<span class="t" style="left:1588.60px;top:923.35px;font-size:18px;line-height:18px;color:#71637e;-webkit-text-stroke:0.32px #71637e;">3</span>
<span class="t" style="left:1571.30px;top:979.85px;font-size:18px;line-height:18px;color:#71637e;-webkit-text-stroke:0.32px #71637e;transform:scaleX(1.0915);">2.5</span>
<span class="t" style="left:1588.60px;top:1036.35px;font-size:18px;line-height:18px;color:#71637e;-webkit-text-stroke:0.32px #71637e;">2</span>
<span class="t" style="left:1570.79px;top:1093.85px;font-size:18px;line-height:18px;color:#71637e;-webkit-text-stroke:0.32px #71637e;transform:scaleX(1.1120);">1.5</span>
<span class="t" style="left:1588.60px;top:1150.35px;font-size:18px;line-height:18px;color:#71637e;-webkit-text-stroke:0.32px #71637e;">1</span>
<span class="t" style="left:1571.30px;top:1206.84px;font-size:18px;line-height:18px;color:#71637e;-webkit-text-stroke:0.32px #71637e;transform:scaleX(1.0915);">0.5</span>
<span class="t" style="left:1588.60px;top:1264.34px;font-size:18px;line-height:18px;color:#71637e;-webkit-text-stroke:0.32px #71637e;">0</span>
<span class="t" style="left:1601.68px;top:1305.05px;font-size:18px;line-height:18px;color:#71637e;-webkit-text-stroke:0.32px #71637e;transform:scaleX(1.1243);">Mar 13th</span>
<span class="t" style="left:1764.99px;top:1305.05px;font-size:18px;line-height:18px;color:#71637e;-webkit-text-stroke:0.32px #71637e;transform:scaleX(1.1127);">Mar 21st</span>
<span class="t" style="left:1998.80px;top:1305.05px;font-size:18px;line-height:18px;color:#71637e;-webkit-text-stroke:0.32px #71637e;transform:scaleX(1.1048);">Apr 1st</span>
<span class="t" style="left:2079.45px;top:1305.05px;font-size:18px;line-height:18px;color:#71637e;-webkit-text-stroke:0.32px #71637e;transform:scaleX(1.1276);">Apr 5th</span>
<span class="t" style="left:2161.00px;top:1305.05px;font-size:18px;line-height:18px;color:#71637e;-webkit-text-stroke:0.32px #71637e;transform:scaleX(1.1294);">Apr 9th</span>
</div>
</body></html>
